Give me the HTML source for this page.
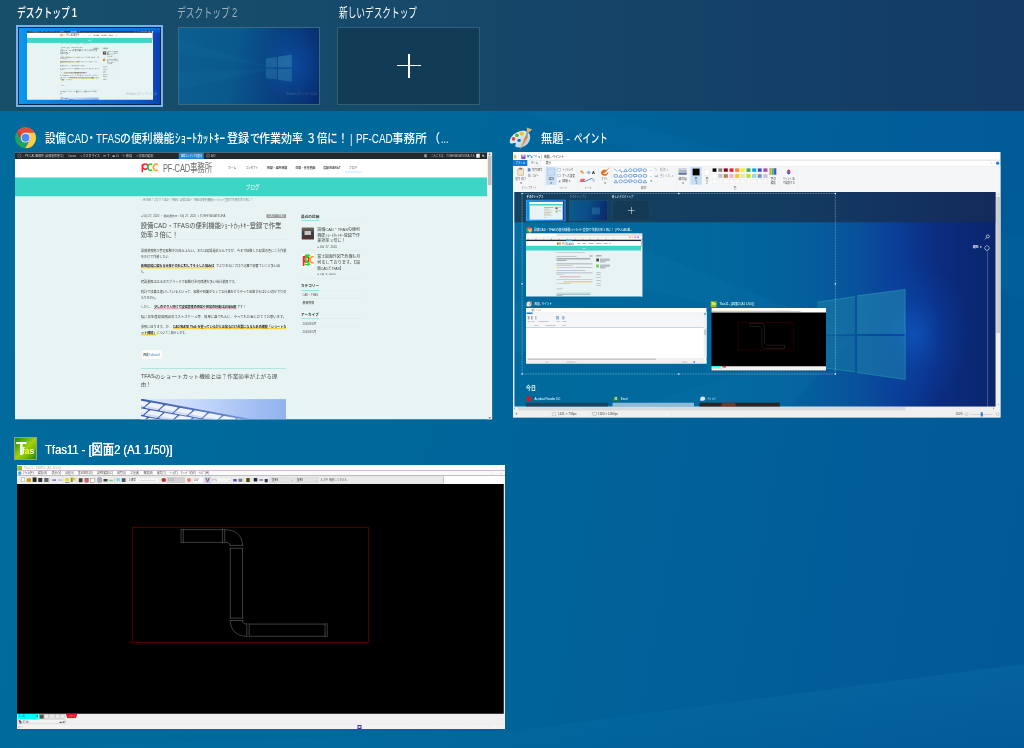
<!DOCTYPE html>
<html lang="ja">
<head>
<meta charset="utf-8">
<title>タスク ビュー</title>
<style>
html,body{margin:0;padding:0}
body{width:1024px;height:748px;overflow:hidden;position:relative;
  font-family:"Liberation Sans","Noto Sans CJK JP",sans-serif;color:#fff;
  background:linear-gradient(100deg,#006b9c 0%,#00689b 40%,#015f99 72%,#015898 100%);}
.a{position:absolute}
.t{position:absolute;white-space:nowrap;transform-origin:0 0;line-height:1}
#strip{left:0;top:0;width:1024px;height:111px;
  background:linear-gradient(90deg,#174f6a 0%,#16496a 40%,#144067 75%,#133a63 100%);}
.dlabel{font-size:13px;top:6.2px}
.wlabel{font-size:13.5px;font-weight:500}
.x4{position:absolute;transform:scale(.25);transform-origin:0 0;overflow:hidden}
.x8{position:absolute;transform:scale(.125);transform-origin:0 0;overflow:hidden}
</style>
</head>
<body>

<!-- wallpaper light rays (blurred backdrop) -->
<svg class="a" style="left:0;top:0" width="1024" height="748" viewBox="0 0 1024 748">
<defs><linearGradient id="ry1" x1="0" y1="0" x2="0" y2="1"><stop offset="0" stop-color="#2aa0d0" stop-opacity=".13"/><stop offset="1" stop-color="#2aa0d0" stop-opacity=".03"/></linearGradient></defs>
<path d="M512 731L1024 664V748H512z" fill="url(#ry1)"/>
<path d="M0 748L512 731V748z" fill="#2aa0d0" opacity=".05"/>
<path d="M590 111L1024 238V300L520 111z" fill="#2aa0d0" opacity=".05"/>
</svg>

<!-- ============ virtual desktop strip ============ -->
<div id="strip" class="a"></div>
<div class="t dlabel" style="left:17.2px;font-weight:500;transform:scaleX(.677)">デスクトップ</div><div class="t dlabel" style="left:72px;top:6.6px;font-size:12px;font-weight:bold;transform:scaleX(.72)">1</div>
<div class="t dlabel" style="left:177.2px;color:#9db1bf;transform:scaleX(.677)">デスクトップ</div><div class="t dlabel" style="left:231.6px;top:6.6px;font-size:12px;color:#9db1bf;transform:scaleX(.78)">2</div>
<div class="t dlabel" style="left:338.5px;transform:scaleX(.667)">新しいデスクトップ</div>

<!-- desktop 1 thumb -->
<div class="a" id="d1" style="left:16px;top:25px;width:147px;height:82px;background:#6fb4ec"></div>
<div class="a" style="left:18px;top:27px;width:143px;height:78px;background:#0b2550"></div>
<div class="a" id="d1in" style="left:19px;top:28px;width:141px;height:76px;background:linear-gradient(90deg,#0a8ee0 0%,#0a78d8 10%,#0a5ac8 85%,#0a3fb0 100%);overflow:hidden"></div>

<!-- desktop 2 thumb -->
<div class="a" id="d2" style="left:178px;top:27px;width:142px;height:78px;box-sizing:border-box;border:1px solid #3c6a84;background:linear-gradient(100deg,#0b5f8f 0%,#0a588c 40%,#093f80 70%,#082a6c 100%);overflow:hidden"></div>

<!-- new desktop -->
<div class="a" id="dn" style="left:337px;top:27px;width:143px;height:78px;box-sizing:border-box;border:1px solid #2f5f79;background:#123c56"></div>
<div class="a" style="left:397px;top:64.5px;width:24px;height:1.6px;background:#fff"></div>
<div class="a" style="left:408.2px;top:53.5px;width:1.6px;height:24px;background:#fff"></div>

<!-- ============ window labels ============ -->
<div class="a wlabel"  id="l1" style="font-size:12.4px;left:0;top:132.55px"><span class="t" style="left:44.5px;transform:scaleX(0.850)">設備</span><span class="t" style="left:67.4px;top:-.93px;font-size:13.5px;transform:scaleX(0.752)">CAD</span><span class="t" style="left:85.8px;transform:scaleX(0.849)">・</span><span class="t" style="left:96px;top:-.93px;font-size:13.5px;transform:scaleX(0.725)">TFAS</span><span class="t" style="left:119.5px;transform:scaleX(0.871)">の</span><span class="t" style="left:131px;transform:scaleX(0.877)">便利機能</span><span class="t" style="left:175.4px;transform:scaleX(0.899)">ｼｮｰﾄｶｯﾄｷｰ</span><span class="t" style="left:227px;transform:scaleX(0.893)">登録</span><span class="t" style="left:249.5px;transform:scaleX(0.806)">で</span><span class="t" style="left:259.3px;transform:scaleX(0.889)">作業効率</span><span class="t" style="left:305.5px;transform:scaleX(0.847)">３</span><span class="t" style="left:317px;transform:scaleX(0.833)">倍に！</span><span class="t" style="left:350px;transform:scaleX(0.774)">|</span><span class="t" style="left:355.6px;top:-.93px;font-size:13.5px;transform:scaleX(0.730)">PF-CAD</span><span class="t" style="left:392.3px;transform:scaleX(0.936)">事務所</span><span class="t" style="left:429px;transform:scaleX(0.887)">（</span><span class="t" style="left:441px;transform:scaleX(0.715)">...</span></div>
<div class="a wlabel"  id="l2" style="font-size:12.4px;left:0;top:132.55px"><span class="t" style="left:540.6px;transform:scaleX(0.904)">無題</span><span class="t" style="left:566px;transform:scaleX(0.968)">-</span><span class="t" style="left:574.2px;transform:scaleX(0.677)">ペイント</span></div>
<div class="t wlabel" id="l3" style="left:45px;top:443px;transform:scaleX(.83);text-shadow:.3px 0 0 #fff">Tfas11 - [図面2 (A1 1/50)]</div>
<!-- ============ window icons ============ -->
<svg class="a" style="left:14px;top:126px" width="24" height="24" viewBox="14 126 24 24">
<defs><linearGradient id="cg" x1="0" y1="0" x2="1" y2="1"><stop offset="0" stop-color="#b8382c"/><stop offset=".5" stop-color="#de4c3e"/></linearGradient></defs>
<g transform="translate(25.55 137.65) scale(10.5 10.65)">
<path d="M-0.842 -0.539 A1 1 0 0 1 0.888 -0.460 L0.000 -0.460 L0 0 L-0.398 0.230 Z" fill="#df4f41"/><path d="M0.888 -0.460 A1 1 0 0 1 -0.046 0.999 L0.398 0.230 L0 0 L0.000 -0.460 Z" fill="#fdcc42"/><path d="M-0.046 0.999 A1 1 0 0 1 -0.842 -0.539 L-0.398 0.230 L0 0 L0.398 0.230 Z" fill="#1da361"/>
<path d="M-0.842 -0.539 L-0.620 -0.620 L-0.200 0.050 L-0.398 0.230 Z" fill="#b93a2e" opacity=".55"/>
<circle r=".465" fill="#eef1f5"/><circle r=".375" fill="#4d8cf5"/>
</g></svg>
<svg class="a" style="left:507px;top:125px" width="28" height="26" viewBox="507 125 28 26">
<defs>
<linearGradient id="pg" x1="0" y1="0" x2="1" y2="1"><stop offset="0" stop-color="#f4f9fd"/><stop offset=".5" stop-color="#cfe3f3"/><stop offset="1" stop-color="#9fc8e8"/></linearGradient>
<linearGradient id="bg" x1="0" y1="1" x2="1" y2="0"><stop offset="0" stop-color="#f3a33a"/><stop offset="1" stop-color="#e07a1c"/></linearGradient>
</defs>
<path d="M509.8 142.2C509.6 137.4 514.2 132.6 520 131.2C525.6 129.9 530 132 530.2 137C530.4 142 526.4 146.4 521.4 147.3C518 147.9 515 147.3 515.2 145.6C515.4 144.4 516.6 143.8 515.6 143.2C514.2 142.5 510 144.6 509.8 142.2Z" fill="url(#pg)"/>
<ellipse cx="519.1" cy="140.4" rx="1.7" ry="1.4" fill="#0e5f98"/>
<circle cx="513.5" cy="138.9" r="1.8" fill="#e0443c"/>
<circle cx="516.9" cy="135.3" r="1.9" fill="#5cb531"/>
<circle cx="521.7" cy="133.6" r="2.1" fill="#f6bd24"/>
<path d="M520.2 148.8L525.2 136.4L527.2 135.6L527.6 137.6L521 148.6Z" fill="url(#bg)"/>
<path d="M525.4 136.2L527 131.6L528.6 132.2L527.5 137Z" fill="#9a9ea6"/>
<path d="M527 131.8L526.7 127.4L532.2 129.5L528.7 132.4Z" fill="#e2b46a"/>
</svg>

<div class="a" style="left:14.1px;top:436.9px;width:22.7px;height:22.9px;box-sizing:border-box;border:1px solid #a39c8c;background:linear-gradient(135deg,#1c8a08 0%,#4ea80a 22%,#a0d208 50%,#7cbc08 70%,#2a8e08 95%)"></div>
<div class="t" style="left:16.1px;top:440.2px;font-size:18px;font-weight:bold;color:#fff;transform:scaleX(.98)">T</div>
<div class="t" style="left:21.6px;top:446.3px;font-size:9.5px;font-weight:bold;color:#e8fbff;transform:scaleX(.9)">f<span style="color:#ffff20">a</span><span style="color:#fff">s</span></div>

<!-- ============ desktop thumbs content ============ -->
<div class="a" style="left:19px;top:28px;width:141px;height:76px;overflow:hidden;background:linear-gradient(90deg,#0a9cf0 0%,#0a8ee8 6%,#0a70d8 50%,#0a54c4 90%,#0a40b0 100%)">
 <div class="a" style="left:0;top:0;width:141px;height:6px;background:linear-gradient(180deg,rgba(10,150,240,.6),rgba(10,150,240,0))"></div>
</div>

<svg class="a" style="left:179px;top:28px" width="140" height="76" viewBox="179 28 140 76">
<defs><radialGradient id="d2g"><stop offset="0" stop-color="#0c58b8" stop-opacity=".55"/><stop offset="1" stop-color="#0c58b8" stop-opacity="0"/></radialGradient></defs>
<ellipse cx="294" cy="66" rx="34" ry="40" fill="url(#d2g)"/>
<path d="M277 68L179 40V54z" fill="#2a8ac0" opacity=".08"/>
<path d="M277 68L179 72V90z" fill="#2a8ac0" opacity=".08"/>
<path d="M266 58.6L277 56.9V67.6H266z" fill="#2c7aa4" opacity=".55"/>
<path d="M278 56.7L291.8 54.6V67.6H278z" fill="#3182aa" opacity=".6"/>
<path d="M266 68.8H277V79.6L266 78z" fill="#2874a0" opacity=".55"/>
<path d="M278 68.8H291.8V81.8L278 79.8z" fill="#2c7aa4" opacity=".6"/>
</svg>

<div class="x4" id="chrome" style="left:15px;top:152px;width:1909.2px;height:1070px;background:transparent">
<div class="a" style="left:0px;top:2.4px;width:1909.2px;height:1067.6px;background:#e8f4f4;"></div>
<div class="a" style="left:0px;top:2.4px;width:1889.2px;height:25.2px;background:#23282d;"></div>
<div class="a" style="left:10px;top:7px;width:15px;height:15px;border-radius:50%;border:2px solid #9ca2a7;box-sizing:border-box"></div>
<span class="t" style="left:30px;top:8.6px;font-size:13.2px;color:#c8ccd0;transform:scaleX(0.855);">⌂ PF-CAD事務所 (設備業界施工)</span>
<span class="t" style="left:212px;top:9px;font-size:12.4px;color:#c8ccd0;transform:scaleX(0.749);">Cocoon</span>
<span class="t" style="left:258px;top:8.6px;font-size:13.2px;color:#c8ccd0;transform:scaleX(0.878);">✎ カスタマイズ</span>
<span class="t" style="left:352px;top:9px;font-size:12.4px;color:#c8ccd0;transform:scaleX(1.278);">⟳ 7</span>
<span class="t" style="left:390px;top:9px;font-size:12.4px;color:#c8ccd0;transform:scaleX(1.346);">■ 0</span>
<span class="t" style="left:428px;top:8.6px;font-size:13.2px;color:#c8ccd0;transform:scaleX(0.925);">＋ 新規</span>
<span class="t" style="left:482px;top:8.6px;font-size:13.2px;color:#c8ccd0;transform:scaleX(0.893);">✎ 投稿の編集</span>
<div class="a" style="left:655.2px;top:2.4px;width:100px;height:25.2px;background:#2686d0;"></div>
<span class="t" style="left:664px;top:9.2px;font-size:12px;color:#fff;transform:scaleX(0.700);">検索エンジンでの表示</span>
<div class="a" style="left:764.8px;top:7px;width:14px;height:14px;border-radius:50%;border:2px solid #b8bcc0;box-sizing:border-box"></div>
<span class="t" style="left:784px;top:9.2px;font-size:12px;color:#c8ccd0;transform:scaleX(0.871);">AIO</span>
<div class="a" style="left:1637.2px;top:9.2px;width:10px;height:12px;background:#9aa0a6;"></div>
<span class="t" style="left:1664px;top:9px;font-size:12.4px;color:#c8ccd0;transform:scaleX(0.817);">こんにちは、TOSHIYA KATSURA さん</span>
<div class="a" style="left:1845.2px;top:7.2px;width:14px;height:16px;background:#f0f0f0;"></div>
<span class="t" style="left:1869.2px;top:9.6px;font-size:11.2px;color:#c8ccd0;transform:scaleX(0.857);filter:grayscale(1) brightness(2);">🔍</span>
<div class="a" style="left:0px;top:27.6px;width:1889.2px;height:74.8px;background:#fff;"></div>
<svg class="a" style="left:0;top:0" width="1909.2" height="1070" viewBox="15 152 477.3 267.5"><g fill="none" stroke-width="1.5"><path d="M142.3 172.3V164.3" stroke="#f23"/><circle cx="145.2" cy="166.6" r="2.6" stroke="#f23"/><path d="M152.2 164.6a2.9 3.1 0 1 0 0 5.2" stroke="#2c3"/><path d="M157.8 164.6a2.9 3.1 0 1 0 0 5.2" stroke="#f92"/></g></svg>
<span class="t" style="left:592px;top:40px;font-size:44.8px;color:#6e6e6e;transform:scaleX(0.672);letter-spacing:-1px;">PF-CAD事務所</span>
<span class="t" style="left:852px;top:58.4px;font-size:12.8px;color:#444;transform:scaleX(0.863);">ホーム</span>
<span class="t" style="left:922px;top:58.4px;font-size:12.8px;color:#444;transform:scaleX(0.781);">コンセプト</span>
<span class="t" style="left:1008px;top:58.4px;font-size:12.8px;color:#444;transform:scaleX(0.902);font-weight:bold;">視察・遠地視察</span>
<span class="t" style="left:1122px;top:58.4px;font-size:12.8px;color:#444;transform:scaleX(0.884);font-weight:bold;">採取・作業動画</span>
<span class="t" style="left:1234px;top:58.4px;font-size:12.8px;color:#444;transform:scaleX(0.776);font-weight:bold;">店舗VR/AR/IoT</span>
<span class="t" style="left:1336px;top:58.4px;font-size:12.8px;color:#444;transform:scaleX(0.865);">ブログ</span>
<div class="a" style="left:1320px;top:78.8px;width:67.2px;height:2.4px;background:#8fd0ee;"></div>
<div class="a" style="left:0px;top:102.4px;width:1889.2px;height:74.8px;background:#3dd6c6;"></div>
<span class="t" style="left:922.4px;top:129.6px;font-size:22.4px;color:#fff;transform:scaleX(0.846);">ブログ</span>
<span class="t" style="left:504px;top:184.6px;font-size:11.6px;color:#7a8585;transform:scaleX(0.896);">⌂ HOME / ブログ / CAD・TFAS / 設備CAD・TFASの便利機能ｼｮｰﾄｶｯﾄｷｰ登録で作業効率３倍に！</span>
<span class="t" style="left:504px;top:251.2px;font-size:11.2px;color:#555;transform:scaleX(0.990);">● 6月 27, 2020 ・ 最終更新日：6月 27, 2020   ✎ TOSHIYA KATSURA</span>
<div class="a" style="left:1006px;top:248.8px;width:78.4px;height:15.2px;background:#9a9a9a;"></div>
<span class="t" style="left:1014px;top:251.2px;font-size:10.4px;color:#e8e8e8;transform:scaleX(1.077);">CAD・TFAS</span>
<span class="t" style="left:503.2px;top:281px;font-size:26.8px;color:#4c4c4c;transform:scaleX(0.950);">設備CAD・TFASの便利機能ｼｮｰﾄｶｯﾄｷｰ登録で作業</span>
<span class="t" style="left:503.2px;top:317px;font-size:26.8px;color:#4c4c4c;transform:scaleX(0.930);">効率３倍に！</span>
<div class="a" style="left:504px;top:350.8px;width:580.4px;height:1.2px;background:#d3e3e3;"></div>
<span class="t" style="left:504px;top:389px;font-size:12.4px;color:#3a3a3a;transform:scaleX(0.998);">設備業界施工管理経験が20年以上ない。または現場過去なんですが、今まで経験した現場の色にこう作業</span>
<span class="t" style="left:504px;top:412.2px;font-size:12.4px;color:#3a3a3a;transform:scaleX(0.986);">をかけて作業したい</span>
<div class="a" style="left:504px;top:460.8px;width:292.8px;height:5.6px;background:#ffd24a;"></div>
<span class="t" style="left:504px;top:451px;font-size:12.4px;color:#222;transform:scaleX(0.987);font-weight:bold;">新規設備に関わる仕事や会社に対してそうした悩みは</span>
<span class="t" style="left:804px;top:451px;font-size:12.4px;color:#3a3a3a;transform:scaleX(0.985);">でよりまれにブログ記事で参数ていこと多い訳</span>
<span class="t" style="left:504px;top:474.6px;font-size:12.4px;color:#3a3a3a;transform:scaleX(0.726);">た。</span>
<span class="t" style="left:504px;top:512.2px;font-size:12.4px;color:#3a3a3a;transform:scaleX(1.008);">建設業界ははるまだブラックで経験付きの保護を多い会計業界です。</span>
<span class="t" style="left:504px;top:553px;font-size:12.4px;color:#3a3a3a;transform:scaleX(1.003);">統計で加算は違いしているといって、経験や知識がなくてお仕事をどうやって迅速すればいいのかでりの</span>
<span class="t" style="left:504px;top:577.8px;font-size:12.4px;color:#3a3a3a;transform:scaleX(0.903);">なりません。</span>
<span class="t" style="left:504px;top:614.2px;font-size:12.4px;color:#3a3a3a;transform:scaleX(0.912);">しかし、</span>
<div class="a" style="left:556px;top:624.8px;width:329.6px;height:4px;background:#f5a3bd;"></div>
<span class="t" style="left:556px;top:614.2px;font-size:12.4px;color:#222;transform:scaleX(0.985);font-weight:bold;">少しの余り人向けで設備管理の現場や現場の時間は記録短縮</span>
<span class="t" style="left:888px;top:614.2px;font-size:12.4px;color:#3a3a3a;transform:scaleX(0.968);">です！</span>
<span class="t" style="left:504px;top:653.8px;font-size:12.4px;color:#3a3a3a;transform:scaleX(1.072);">私に非生産現場施設のコストスケール等、簡単に誰でもんに、やってもお金に立ててお思います。</span>
<span class="t" style="left:504px;top:693px;font-size:12.4px;color:#3a3a3a;transform:scaleX(1.006);">参照に迫ります。が、</span>
<div class="a" style="left:632px;top:702.8px;width:453.2px;height:6px;background:#ffd24a;"></div>
<span class="t" style="left:632px;top:693px;font-size:12.4px;color:#222;transform:scaleX(0.991);font-weight:bold;">CAD!MATE TfaS を使っているひとは知るだけ必要になるための機能「ショートカ</span>
<div class="a" style="left:504px;top:728px;width:62px;height:6px;background:#ffd24a;"></div>
<span class="t" style="left:504px;top:718.2px;font-size:12.4px;color:#222;transform:scaleX(1.001);font-weight:bold;">ット機能」</span>
<span class="t" style="left:568px;top:718.2px;font-size:12.4px;color:#3a3a3a;transform:scaleX(0.903);">についてご紹介します。</span>
<div class="a" style="left:504.8px;top:790.4px;width:85.2px;height:40px;background:#fbfdfd;border:1px solid #d5dcdc;box-sizing:border-box"></div>
<span class="t" style="left:512.8px;top:804.4px;font-size:12px;color:#333;transform:scaleX(0.899);font-weight:bold;">目次</span>
<span class="t" style="left:537.6px;top:804.8px;font-size:11.2px;color:#4a7ac2;transform:scaleX(1.261);">[show]</span>
<div class="a" style="left:504px;top:864px;width:580.4px;height:2.4px;background:#6fdccf;"></div>
<span class="t" style="left:503.2px;top:887.6px;font-size:20px;color:#444;transform:scaleX(1.115);">TFASのショートカット機能とは？作業効率が上がる理</span>
<span class="t" style="left:503.2px;top:919.6px;font-size:20px;color:#444;transform:scaleX(1.070);">由！</span>
<svg class="a" style="left:0;top:0" width="1909.2" height="1070" viewBox="15 152 477.3 267.5"><defs><linearGradient id="kb" x1="0" y1="0" x2="1" y2="0"><stop offset="0" stop-color="#dbe8fd"/><stop offset=".35" stop-color="#c9dbfb"/><stop offset=".7" stop-color="#a9c4f4"/><stop offset="1" stop-color="#92b2ee"/></linearGradient><linearGradient id="kb2" x1="0" y1="0" x2="1" y2="0"><stop offset="0" stop-color="#3d5caa"/><stop offset=".6" stop-color="#5a7cc6"/><stop offset="1" stop-color="#86a4e0"/></linearGradient><clipPath id="kbc"><rect x="140.8" y="399.1" width="145.3" height="20.8"/></clipPath></defs><g clip-path="url(#kbc)"><rect x="140.8" y="399.1" width="145.3" height="20.8" fill="url(#kb)"/><path d="M141 398.6L262 421H141z" fill="url(#kb2)"/><g transform="translate(141 399.6) rotate(10.4) skewX(-38)"><rect x="-4" y="1" width="13.3" height="6.5" rx="1.2" fill="#eef3fb"/><rect x="-4" y="5.6" width="13.3" height="1.3" fill="#c9d6f0"/><rect x="10.8" y="1" width="13.3" height="6.5" rx="1.2" fill="#eef3fb"/><rect x="10.8" y="5.6" width="13.3" height="1.3" fill="#c9d6f0"/><rect x="25.6" y="1" width="13.3" height="6.5" rx="1.2" fill="#eef3fb"/><rect x="25.6" y="5.6" width="13.3" height="1.3" fill="#c9d6f0"/><rect x="40.4" y="1" width="13.3" height="6.5" rx="1.2" fill="#eef3fb"/><rect x="40.4" y="5.6" width="13.3" height="1.3" fill="#c9d6f0"/><rect x="55.2" y="1" width="13.3" height="6.5" rx="1.2" fill="#eef3fb"/><rect x="55.2" y="5.6" width="13.3" height="1.3" fill="#c9d6f0"/><rect x="70" y="1" width="13.3" height="6.5" rx="1.2" fill="#eef3fb"/><rect x="70" y="5.6" width="13.3" height="1.3" fill="#c9d6f0"/><rect x="84.8" y="1" width="13.3" height="6.5" rx="1.2" fill="#eef3fb"/><rect x="84.8" y="5.6" width="13.3" height="1.3" fill="#c9d6f0"/><rect x="99.6" y="1" width="13.3" height="6.5" rx="1.2" fill="#eef3fb"/><rect x="99.6" y="5.6" width="13.3" height="1.3" fill="#c9d6f0"/><rect x="114.4" y="1" width="13.3" height="6.5" rx="1.2" fill="#eef3fb"/><rect x="114.4" y="5.6" width="13.3" height="1.3" fill="#c9d6f0"/><rect x="129.2" y="1" width="13.3" height="6.5" rx="1.2" fill="#eef3fb"/><rect x="129.2" y="5.6" width="13.3" height="1.3" fill="#c9d6f0"/><rect x="-12" y="8.6" width="13.3" height="6.5" rx="1.2" fill="#eef3fb"/><rect x="-12" y="13.2" width="13.3" height="1.3" fill="#c9d6f0"/><rect x="2.8" y="8.6" width="13.3" height="6.5" rx="1.2" fill="#eef3fb"/><rect x="2.8" y="13.2" width="13.3" height="1.3" fill="#c9d6f0"/><rect x="17.6" y="8.6" width="13.3" height="6.5" rx="1.2" fill="#eef3fb"/><rect x="17.6" y="13.2" width="13.3" height="1.3" fill="#c9d6f0"/><rect x="32.4" y="8.6" width="13.3" height="6.5" rx="1.2" fill="#eef3fb"/><rect x="32.4" y="13.2" width="13.3" height="1.3" fill="#c9d6f0"/><rect x="47.2" y="8.6" width="13.3" height="6.5" rx="1.2" fill="#eef3fb"/><rect x="47.2" y="13.2" width="13.3" height="1.3" fill="#c9d6f0"/><rect x="62" y="8.6" width="13.3" height="6.5" rx="1.2" fill="#eef3fb"/><rect x="62" y="13.2" width="13.3" height="1.3" fill="#c9d6f0"/><rect x="76.8" y="8.6" width="13.3" height="6.5" rx="1.2" fill="#eef3fb"/><rect x="76.8" y="13.2" width="13.3" height="1.3" fill="#c9d6f0"/><rect x="91.6" y="8.6" width="13.3" height="6.5" rx="1.2" fill="#eef3fb"/><rect x="91.6" y="13.2" width="13.3" height="1.3" fill="#c9d6f0"/><rect x="106.4" y="8.6" width="13.3" height="6.5" rx="1.2" fill="#eef3fb"/><rect x="106.4" y="13.2" width="13.3" height="1.3" fill="#c9d6f0"/><rect x="121.2" y="8.6" width="13.3" height="6.5" rx="1.2" fill="#eef3fb"/><rect x="121.2" y="13.2" width="13.3" height="1.3" fill="#c9d6f0"/><rect x="-6" y="16.2" width="13.3" height="6.5" rx="1.2" fill="#eef3fb"/><rect x="-6" y="20.8" width="13.3" height="1.3" fill="#c9d6f0"/><rect x="8.8" y="16.2" width="13.3" height="6.5" rx="1.2" fill="#eef3fb"/><rect x="8.8" y="20.8" width="13.3" height="1.3" fill="#c9d6f0"/><rect x="23.6" y="16.2" width="13.3" height="6.5" rx="1.2" fill="#eef3fb"/><rect x="23.6" y="20.8" width="13.3" height="1.3" fill="#c9d6f0"/><rect x="38.4" y="16.2" width="13.3" height="6.5" rx="1.2" fill="#eef3fb"/><rect x="38.4" y="20.8" width="13.3" height="1.3" fill="#c9d6f0"/><rect x="53.2" y="16.2" width="13.3" height="6.5" rx="1.2" fill="#eef3fb"/><rect x="53.2" y="20.8" width="13.3" height="1.3" fill="#c9d6f0"/><rect x="68" y="16.2" width="13.3" height="6.5" rx="1.2" fill="#eef3fb"/><rect x="68" y="20.8" width="13.3" height="1.3" fill="#c9d6f0"/><rect x="82.8" y="16.2" width="13.3" height="6.5" rx="1.2" fill="#eef3fb"/><rect x="82.8" y="20.8" width="13.3" height="1.3" fill="#c9d6f0"/><rect x="97.6" y="16.2" width="13.3" height="6.5" rx="1.2" fill="#eef3fb"/><rect x="97.6" y="20.8" width="13.3" height="1.3" fill="#c9d6f0"/><rect x="112.4" y="16.2" width="13.3" height="6.5" rx="1.2" fill="#eef3fb"/><rect x="112.4" y="20.8" width="13.3" height="1.3" fill="#c9d6f0"/><rect x="127.2" y="16.2" width="13.3" height="6.5" rx="1.2" fill="#eef3fb"/><rect x="127.2" y="20.8" width="13.3" height="1.3" fill="#c9d6f0"/></g></g></svg>
<span class="t" style="left:1144px;top:250.6px;font-size:13.2px;color:#333;transform:scaleX(1.110);font-weight:bold;">最近の投稿</span>
<div class="a" style="left:1144px;top:273.6px;width:240px;height:1.6px;background:#d5e6e6;"></div>
<div class="a" style="left:1144px;top:272.8px;width:73.2px;height:2.8px;background:#7fe0d4;"></div>
<div class="a" style="left:1147.2px;top:302px;width:48.8px;height:48px;background:linear-gradient(180deg,#7a6a5c 0%,#3a3d48 45%,#5a2f2a 100%)"></div>
<div class="a" style="left:1158px;top:316px;width:26px;height:16px;background:#c8c4bc;"></div>
<span class="t" style="left:1208.8px;top:303.2px;font-size:16px;color:#444;transform:scaleX(1.008);">設備CAD・TFASの便利</span>
<span class="t" style="left:1208.8px;top:324.8px;font-size:16px;color:#444;transform:scaleX(1.019);">機能ｼｮｰﾄｶｯﾄｷｰ登録で作</span>
<span class="t" style="left:1208.8px;top:346.4px;font-size:16px;color:#444;transform:scaleX(1.011);">業効率３倍に！</span>
<span class="t" style="left:1208.8px;top:374px;font-size:10.4px;color:#555;transform:scaleX(1.153);">● 6月 27, 2020</span>
<div class="a" style="left:1144px;top:393.2px;width:240px;height:1.2px;background:#d5e6e6;"></div>
<div class="a" style="left:1147.2px;top:410px;width:48.8px;height:50px;background:#fff;"></div>
<svg class="a" style="left:0;top:0" width="1909.2" height="1070" viewBox="15 152 477.3 267.5"><g fill="none" stroke-width="1.7"><path d="M303.6 266V256" stroke="#f23"/><circle cx="306.2" cy="259.2" r="2.6" stroke="#f23"/><path d="M309.5 256.2a2.8 3.4 0 1 0 0 6.4M305 256a3 2 0 0 1 5 0M305 264a3 2 0 0 0 5 0" stroke="#2d2"/><path d="M313.6 257a2.6 3 0 1 0 0 5.4" stroke="#f92"/></g></svg>
<span class="t" style="left:1208.8px;top:412px;font-size:16px;color:#444;transform:scaleX(0.973);">富士図面作図で危機も月</span>
<span class="t" style="left:1208.8px;top:434.4px;font-size:16px;color:#444;transform:scaleX(1.035);">何をしております。【設</span>
<span class="t" style="left:1208.8px;top:456.8px;font-size:16px;color:#444;transform:scaleX(0.854);">備CADとTFAS】</span>
<span class="t" style="left:1208.8px;top:485.2px;font-size:10.4px;color:#555;transform:scaleX(1.164);">● 5月 9, 2020</span>
<div class="a" style="left:1144px;top:504.8px;width:240px;height:1.2px;background:#d5e6e6;"></div>
<span class="t" style="left:1144px;top:530px;font-size:13.6px;color:#333;transform:scaleX(1.059);font-weight:bold;">カテゴリー</span>
<div class="a" style="left:1144px;top:553.6px;width:240px;height:1.6px;background:#d5e6e6;"></div>
<div class="a" style="left:1144px;top:552.8px;width:72px;height:2.8px;background:#7fe0d4;"></div>
<span class="t" style="left:1150px;top:566.2px;font-size:11.6px;color:#555;transform:scaleX(0.953);">CAD・TFAS</span>
<div class="a" style="left:1144px;top:586.4px;width:240px;height:1.2px;background:#dcebeb;"></div>
<span class="t" style="left:1150px;top:599.4px;font-size:11.6px;color:#333;transform:scaleX(0.992);">最新情報</span>
<span class="t" style="left:1144px;top:643.6px;font-size:13.6px;color:#333;transform:scaleX(1.072);font-weight:bold;">アーカイブ</span>
<div class="a" style="left:1144px;top:666.4px;width:240px;height:1.6px;background:#d5e6e6;"></div>
<div class="a" style="left:1144px;top:665.6px;width:72px;height:2.8px;background:#7fe0d4;"></div>
<span class="t" style="left:1150px;top:679.8px;font-size:11.6px;color:#555;transform:scaleX(1.010);">2020年6月</span>
<div class="a" style="left:1144px;top:700.8px;width:240px;height:1.2px;background:#dcebeb;"></div>
<span class="t" style="left:1150px;top:713.4px;font-size:11.6px;color:#555;transform:scaleX(1.010);">2020年5月</span>
<div class="a" style="left:1889.2px;top:2.4px;width:20px;height:1067.6px;background:#f1f1f1;"></div>
<div class="a" style="left:1892px;top:15.2px;width:13.6px;height:116.8px;background:#bdbdbd;"></div>
<svg class="a" style="left:0;top:0" width="1909.2" height="1070" viewBox="15 152 477.3 267.5"><path d="M489.7 153.3l1.2 1.5h-2.4zM489.7 418.8l1.2-1.5h-2.4z" fill="#555"/></svg>
</div>
<div class="a" style="left:26.7px;top:31.05px;width:477.3px;height:255.957px;overflow:hidden;transform:scale(0.264613,0.2686);transform-origin:0 0">
<div class="x4" id="chromemini" style="left:0;top:0;width:1909.2px;height:1070px;background:transparent">
<div class="a" style="left:0px;top:2.4px;width:1909.2px;height:1067.6px;background:#e8f4f4;"></div>
<div class="a" style="left:0px;top:2.4px;width:1889.2px;height:25.2px;background:#23282d;"></div>
<div class="a" style="left:10px;top:7px;width:15px;height:15px;border-radius:50%;border:2px solid #9ca2a7;box-sizing:border-box"></div>
<span class="t" style="left:30px;top:8.6px;font-size:13.2px;color:#c8ccd0;transform:scaleX(0.855);">⌂ PF-CAD事務所 (設備業界施工)</span>
<span class="t" style="left:212px;top:9px;font-size:12.4px;color:#c8ccd0;transform:scaleX(0.749);">Cocoon</span>
<span class="t" style="left:258px;top:8.6px;font-size:13.2px;color:#c8ccd0;transform:scaleX(0.878);">✎ カスタマイズ</span>
<span class="t" style="left:352px;top:9px;font-size:12.4px;color:#c8ccd0;transform:scaleX(1.278);">⟳ 7</span>
<span class="t" style="left:390px;top:9px;font-size:12.4px;color:#c8ccd0;transform:scaleX(1.346);">■ 0</span>
<span class="t" style="left:428px;top:8.6px;font-size:13.2px;color:#c8ccd0;transform:scaleX(0.925);">＋ 新規</span>
<span class="t" style="left:482px;top:8.6px;font-size:13.2px;color:#c8ccd0;transform:scaleX(0.893);">✎ 投稿の編集</span>
<div class="a" style="left:655.2px;top:2.4px;width:100px;height:25.2px;background:#2686d0;"></div>
<span class="t" style="left:664px;top:9.2px;font-size:12px;color:#fff;transform:scaleX(0.700);">検索エンジンでの表示</span>
<div class="a" style="left:764.8px;top:7px;width:14px;height:14px;border-radius:50%;border:2px solid #b8bcc0;box-sizing:border-box"></div>
<span class="t" style="left:784px;top:9.2px;font-size:12px;color:#c8ccd0;transform:scaleX(0.871);">AIO</span>
<div class="a" style="left:1637.2px;top:9.2px;width:10px;height:12px;background:#9aa0a6;"></div>
<span class="t" style="left:1664px;top:9px;font-size:12.4px;color:#c8ccd0;transform:scaleX(0.817);">こんにちは、TOSHIYA KATSURA さん</span>
<div class="a" style="left:1845.2px;top:7.2px;width:14px;height:16px;background:#f0f0f0;"></div>
<span class="t" style="left:1869.2px;top:9.6px;font-size:11.2px;color:#c8ccd0;transform:scaleX(0.857);filter:grayscale(1) brightness(2);">🔍</span>
<div class="a" style="left:0px;top:27.6px;width:1889.2px;height:74.8px;background:#fff;"></div>
<svg class="a" style="left:0;top:0" width="1909.2" height="1070" viewBox="15 152 477.3 267.5"><g fill="none" stroke-width="1.5"><path d="M142.3 172.3V164.3" stroke="#f23"/><circle cx="145.2" cy="166.6" r="2.6" stroke="#f23"/><path d="M152.2 164.6a2.9 3.1 0 1 0 0 5.2" stroke="#2c3"/><path d="M157.8 164.6a2.9 3.1 0 1 0 0 5.2" stroke="#f92"/></g></svg>
<span class="t" style="left:592px;top:40px;font-size:44.8px;color:#6e6e6e;transform:scaleX(0.672);letter-spacing:-1px;">PF-CAD事務所</span>
<span class="t" style="left:852px;top:58.4px;font-size:12.8px;color:#444;transform:scaleX(0.863);">ホーム</span>
<span class="t" style="left:922px;top:58.4px;font-size:12.8px;color:#444;transform:scaleX(0.781);">コンセプト</span>
<span class="t" style="left:1008px;top:58.4px;font-size:12.8px;color:#444;transform:scaleX(0.902);font-weight:bold;">視察・遠地視察</span>
<span class="t" style="left:1122px;top:58.4px;font-size:12.8px;color:#444;transform:scaleX(0.884);font-weight:bold;">採取・作業動画</span>
<span class="t" style="left:1234px;top:58.4px;font-size:12.8px;color:#444;transform:scaleX(0.776);font-weight:bold;">店舗VR/AR/IoT</span>
<span class="t" style="left:1336px;top:58.4px;font-size:12.8px;color:#444;transform:scaleX(0.865);">ブログ</span>
<div class="a" style="left:1320px;top:78.8px;width:67.2px;height:2.4px;background:#8fd0ee;"></div>
<div class="a" style="left:0px;top:102.4px;width:1889.2px;height:74.8px;background:#3dd6c6;"></div>
<span class="t" style="left:922.4px;top:129.6px;font-size:22.4px;color:#fff;transform:scaleX(0.846);">ブログ</span>
<span class="t" style="left:504px;top:184.6px;font-size:11.6px;color:#7a8585;transform:scaleX(0.896);">⌂ HOME / ブログ / CAD・TFAS / 設備CAD・TFASの便利機能ｼｮｰﾄｶｯﾄｷｰ登録で作業効率３倍に！</span>
<span class="t" style="left:504px;top:251.2px;font-size:11.2px;color:#555;transform:scaleX(0.990);">● 6月 27, 2020 ・ 最終更新日：6月 27, 2020   ✎ TOSHIYA KATSURA</span>
<div class="a" style="left:1006px;top:248.8px;width:78.4px;height:15.2px;background:#9a9a9a;"></div>
<span class="t" style="left:1014px;top:251.2px;font-size:10.4px;color:#e8e8e8;transform:scaleX(1.077);">CAD・TFAS</span>
<span class="t" style="left:503.2px;top:281px;font-size:26.8px;color:#4c4c4c;transform:scaleX(0.950);">設備CAD・TFASの便利機能ｼｮｰﾄｶｯﾄｷｰ登録で作業</span>
<span class="t" style="left:503.2px;top:317px;font-size:26.8px;color:#4c4c4c;transform:scaleX(0.930);">効率３倍に！</span>
<div class="a" style="left:504px;top:350.8px;width:580.4px;height:1.2px;background:#d3e3e3;"></div>
<span class="t" style="left:504px;top:389px;font-size:12.4px;color:#3a3a3a;transform:scaleX(0.998);">設備業界施工管理経験が20年以上ない。または現場過去なんですが、今まで経験した現場の色にこう作業</span>
<span class="t" style="left:504px;top:412.2px;font-size:12.4px;color:#3a3a3a;transform:scaleX(0.986);">をかけて作業したい</span>
<div class="a" style="left:504px;top:460.8px;width:292.8px;height:5.6px;background:#ffd24a;"></div>
<span class="t" style="left:504px;top:451px;font-size:12.4px;color:#222;transform:scaleX(0.987);font-weight:bold;">新規設備に関わる仕事や会社に対してそうした悩みは</span>
<span class="t" style="left:804px;top:451px;font-size:12.4px;color:#3a3a3a;transform:scaleX(0.985);">でよりまれにブログ記事で参数ていこと多い訳</span>
<span class="t" style="left:504px;top:474.6px;font-size:12.4px;color:#3a3a3a;transform:scaleX(0.726);">た。</span>
<span class="t" style="left:504px;top:512.2px;font-size:12.4px;color:#3a3a3a;transform:scaleX(1.008);">建設業界ははるまだブラックで経験付きの保護を多い会計業界です。</span>
<span class="t" style="left:504px;top:553px;font-size:12.4px;color:#3a3a3a;transform:scaleX(1.003);">統計で加算は違いしているといって、経験や知識がなくてお仕事をどうやって迅速すればいいのかでりの</span>
<span class="t" style="left:504px;top:577.8px;font-size:12.4px;color:#3a3a3a;transform:scaleX(0.903);">なりません。</span>
<span class="t" style="left:504px;top:614.2px;font-size:12.4px;color:#3a3a3a;transform:scaleX(0.912);">しかし、</span>
<div class="a" style="left:556px;top:624.8px;width:329.6px;height:4px;background:#f5a3bd;"></div>
<span class="t" style="left:556px;top:614.2px;font-size:12.4px;color:#222;transform:scaleX(0.985);font-weight:bold;">少しの余り人向けで設備管理の現場や現場の時間は記録短縮</span>
<span class="t" style="left:888px;top:614.2px;font-size:12.4px;color:#3a3a3a;transform:scaleX(0.968);">です！</span>
<span class="t" style="left:504px;top:653.8px;font-size:12.4px;color:#3a3a3a;transform:scaleX(1.072);">私に非生産現場施設のコストスケール等、簡単に誰でもんに、やってもお金に立ててお思います。</span>
<span class="t" style="left:504px;top:693px;font-size:12.4px;color:#3a3a3a;transform:scaleX(1.006);">参照に迫ります。が、</span>
<div class="a" style="left:632px;top:702.8px;width:453.2px;height:6px;background:#ffd24a;"></div>
<span class="t" style="left:632px;top:693px;font-size:12.4px;color:#222;transform:scaleX(0.991);font-weight:bold;">CAD!MATE TfaS を使っているひとは知るだけ必要になるための機能「ショートカ</span>
<div class="a" style="left:504px;top:728px;width:62px;height:6px;background:#ffd24a;"></div>
<span class="t" style="left:504px;top:718.2px;font-size:12.4px;color:#222;transform:scaleX(1.001);font-weight:bold;">ット機能」</span>
<span class="t" style="left:568px;top:718.2px;font-size:12.4px;color:#3a3a3a;transform:scaleX(0.903);">についてご紹介します。</span>
<div class="a" style="left:504.8px;top:790.4px;width:85.2px;height:40px;background:#fbfdfd;border:1px solid #d5dcdc;box-sizing:border-box"></div>
<span class="t" style="left:512.8px;top:804.4px;font-size:12px;color:#333;transform:scaleX(0.899);font-weight:bold;">目次</span>
<span class="t" style="left:537.6px;top:804.8px;font-size:11.2px;color:#4a7ac2;transform:scaleX(1.261);">[show]</span>
<div class="a" style="left:504px;top:864px;width:580.4px;height:2.4px;background:#6fdccf;"></div>
<span class="t" style="left:503.2px;top:887.6px;font-size:20px;color:#444;transform:scaleX(1.115);">TFASのショートカット機能とは？作業効率が上がる理</span>
<span class="t" style="left:503.2px;top:919.6px;font-size:20px;color:#444;transform:scaleX(1.070);">由！</span>
<svg class="a" style="left:0;top:0" width="1909.2" height="1070" viewBox="15 152 477.3 267.5"><defs><linearGradient id="kb" x1="0" y1="0" x2="1" y2="0"><stop offset="0" stop-color="#dbe8fd"/><stop offset=".35" stop-color="#c9dbfb"/><stop offset=".7" stop-color="#a9c4f4"/><stop offset="1" stop-color="#92b2ee"/></linearGradient><linearGradient id="kb2" x1="0" y1="0" x2="1" y2="0"><stop offset="0" stop-color="#3d5caa"/><stop offset=".6" stop-color="#5a7cc6"/><stop offset="1" stop-color="#86a4e0"/></linearGradient><clipPath id="kbc"><rect x="140.8" y="399.1" width="145.3" height="20.8"/></clipPath></defs><g clip-path="url(#kbc)"><rect x="140.8" y="399.1" width="145.3" height="20.8" fill="url(#kb)"/><path d="M141 398.6L262 421H141z" fill="url(#kb2)"/><g transform="translate(141 399.6) rotate(10.4) skewX(-38)"><rect x="-4" y="1" width="13.3" height="6.5" rx="1.2" fill="#eef3fb"/><rect x="-4" y="5.6" width="13.3" height="1.3" fill="#c9d6f0"/><rect x="10.8" y="1" width="13.3" height="6.5" rx="1.2" fill="#eef3fb"/><rect x="10.8" y="5.6" width="13.3" height="1.3" fill="#c9d6f0"/><rect x="25.6" y="1" width="13.3" height="6.5" rx="1.2" fill="#eef3fb"/><rect x="25.6" y="5.6" width="13.3" height="1.3" fill="#c9d6f0"/><rect x="40.4" y="1" width="13.3" height="6.5" rx="1.2" fill="#eef3fb"/><rect x="40.4" y="5.6" width="13.3" height="1.3" fill="#c9d6f0"/><rect x="55.2" y="1" width="13.3" height="6.5" rx="1.2" fill="#eef3fb"/><rect x="55.2" y="5.6" width="13.3" height="1.3" fill="#c9d6f0"/><rect x="70" y="1" width="13.3" height="6.5" rx="1.2" fill="#eef3fb"/><rect x="70" y="5.6" width="13.3" height="1.3" fill="#c9d6f0"/><rect x="84.8" y="1" width="13.3" height="6.5" rx="1.2" fill="#eef3fb"/><rect x="84.8" y="5.6" width="13.3" height="1.3" fill="#c9d6f0"/><rect x="99.6" y="1" width="13.3" height="6.5" rx="1.2" fill="#eef3fb"/><rect x="99.6" y="5.6" width="13.3" height="1.3" fill="#c9d6f0"/><rect x="114.4" y="1" width="13.3" height="6.5" rx="1.2" fill="#eef3fb"/><rect x="114.4" y="5.6" width="13.3" height="1.3" fill="#c9d6f0"/><rect x="129.2" y="1" width="13.3" height="6.5" rx="1.2" fill="#eef3fb"/><rect x="129.2" y="5.6" width="13.3" height="1.3" fill="#c9d6f0"/><rect x="-12" y="8.6" width="13.3" height="6.5" rx="1.2" fill="#eef3fb"/><rect x="-12" y="13.2" width="13.3" height="1.3" fill="#c9d6f0"/><rect x="2.8" y="8.6" width="13.3" height="6.5" rx="1.2" fill="#eef3fb"/><rect x="2.8" y="13.2" width="13.3" height="1.3" fill="#c9d6f0"/><rect x="17.6" y="8.6" width="13.3" height="6.5" rx="1.2" fill="#eef3fb"/><rect x="17.6" y="13.2" width="13.3" height="1.3" fill="#c9d6f0"/><rect x="32.4" y="8.6" width="13.3" height="6.5" rx="1.2" fill="#eef3fb"/><rect x="32.4" y="13.2" width="13.3" height="1.3" fill="#c9d6f0"/><rect x="47.2" y="8.6" width="13.3" height="6.5" rx="1.2" fill="#eef3fb"/><rect x="47.2" y="13.2" width="13.3" height="1.3" fill="#c9d6f0"/><rect x="62" y="8.6" width="13.3" height="6.5" rx="1.2" fill="#eef3fb"/><rect x="62" y="13.2" width="13.3" height="1.3" fill="#c9d6f0"/><rect x="76.8" y="8.6" width="13.3" height="6.5" rx="1.2" fill="#eef3fb"/><rect x="76.8" y="13.2" width="13.3" height="1.3" fill="#c9d6f0"/><rect x="91.6" y="8.6" width="13.3" height="6.5" rx="1.2" fill="#eef3fb"/><rect x="91.6" y="13.2" width="13.3" height="1.3" fill="#c9d6f0"/><rect x="106.4" y="8.6" width="13.3" height="6.5" rx="1.2" fill="#eef3fb"/><rect x="106.4" y="13.2" width="13.3" height="1.3" fill="#c9d6f0"/><rect x="121.2" y="8.6" width="13.3" height="6.5" rx="1.2" fill="#eef3fb"/><rect x="121.2" y="13.2" width="13.3" height="1.3" fill="#c9d6f0"/><rect x="-6" y="16.2" width="13.3" height="6.5" rx="1.2" fill="#eef3fb"/><rect x="-6" y="20.8" width="13.3" height="1.3" fill="#c9d6f0"/><rect x="8.8" y="16.2" width="13.3" height="6.5" rx="1.2" fill="#eef3fb"/><rect x="8.8" y="20.8" width="13.3" height="1.3" fill="#c9d6f0"/><rect x="23.6" y="16.2" width="13.3" height="6.5" rx="1.2" fill="#eef3fb"/><rect x="23.6" y="20.8" width="13.3" height="1.3" fill="#c9d6f0"/><rect x="38.4" y="16.2" width="13.3" height="6.5" rx="1.2" fill="#eef3fb"/><rect x="38.4" y="20.8" width="13.3" height="1.3" fill="#c9d6f0"/><rect x="53.2" y="16.2" width="13.3" height="6.5" rx="1.2" fill="#eef3fb"/><rect x="53.2" y="20.8" width="13.3" height="1.3" fill="#c9d6f0"/><rect x="68" y="16.2" width="13.3" height="6.5" rx="1.2" fill="#eef3fb"/><rect x="68" y="20.8" width="13.3" height="1.3" fill="#c9d6f0"/><rect x="82.8" y="16.2" width="13.3" height="6.5" rx="1.2" fill="#eef3fb"/><rect x="82.8" y="20.8" width="13.3" height="1.3" fill="#c9d6f0"/><rect x="97.6" y="16.2" width="13.3" height="6.5" rx="1.2" fill="#eef3fb"/><rect x="97.6" y="20.8" width="13.3" height="1.3" fill="#c9d6f0"/><rect x="112.4" y="16.2" width="13.3" height="6.5" rx="1.2" fill="#eef3fb"/><rect x="112.4" y="20.8" width="13.3" height="1.3" fill="#c9d6f0"/><rect x="127.2" y="16.2" width="13.3" height="6.5" rx="1.2" fill="#eef3fb"/><rect x="127.2" y="20.8" width="13.3" height="1.3" fill="#c9d6f0"/></g></g></svg>
<span class="t" style="left:1144px;top:250.6px;font-size:13.2px;color:#333;transform:scaleX(1.110);font-weight:bold;">最近の投稿</span>
<div class="a" style="left:1144px;top:273.6px;width:240px;height:1.6px;background:#d5e6e6;"></div>
<div class="a" style="left:1144px;top:272.8px;width:73.2px;height:2.8px;background:#7fe0d4;"></div>
<div class="a" style="left:1147.2px;top:302px;width:48.8px;height:48px;background:linear-gradient(180deg,#7a6a5c 0%,#3a3d48 45%,#5a2f2a 100%)"></div>
<div class="a" style="left:1158px;top:316px;width:26px;height:16px;background:#c8c4bc;"></div>
<span class="t" style="left:1208.8px;top:303.2px;font-size:16px;color:#444;transform:scaleX(1.008);">設備CAD・TFASの便利</span>
<span class="t" style="left:1208.8px;top:324.8px;font-size:16px;color:#444;transform:scaleX(1.019);">機能ｼｮｰﾄｶｯﾄｷｰ登録で作</span>
<span class="t" style="left:1208.8px;top:346.4px;font-size:16px;color:#444;transform:scaleX(1.011);">業効率３倍に！</span>
<span class="t" style="left:1208.8px;top:374px;font-size:10.4px;color:#555;transform:scaleX(1.153);">● 6月 27, 2020</span>
<div class="a" style="left:1144px;top:393.2px;width:240px;height:1.2px;background:#d5e6e6;"></div>
<div class="a" style="left:1147.2px;top:410px;width:48.8px;height:50px;background:#fff;"></div>
<svg class="a" style="left:0;top:0" width="1909.2" height="1070" viewBox="15 152 477.3 267.5"><g fill="none" stroke-width="1.7"><path d="M303.6 266V256" stroke="#f23"/><circle cx="306.2" cy="259.2" r="2.6" stroke="#f23"/><path d="M309.5 256.2a2.8 3.4 0 1 0 0 6.4M305 256a3 2 0 0 1 5 0M305 264a3 2 0 0 0 5 0" stroke="#2d2"/><path d="M313.6 257a2.6 3 0 1 0 0 5.4" stroke="#f92"/></g></svg>
<span class="t" style="left:1208.8px;top:412px;font-size:16px;color:#444;transform:scaleX(0.973);">富士図面作図で危機も月</span>
<span class="t" style="left:1208.8px;top:434.4px;font-size:16px;color:#444;transform:scaleX(1.035);">何をしております。【設</span>
<span class="t" style="left:1208.8px;top:456.8px;font-size:16px;color:#444;transform:scaleX(0.854);">備CADとTFAS】</span>
<span class="t" style="left:1208.8px;top:485.2px;font-size:10.4px;color:#555;transform:scaleX(1.164);">● 5月 9, 2020</span>
<div class="a" style="left:1144px;top:504.8px;width:240px;height:1.2px;background:#d5e6e6;"></div>
<span class="t" style="left:1144px;top:530px;font-size:13.6px;color:#333;transform:scaleX(1.059);font-weight:bold;">カテゴリー</span>
<div class="a" style="left:1144px;top:553.6px;width:240px;height:1.6px;background:#d5e6e6;"></div>
<div class="a" style="left:1144px;top:552.8px;width:72px;height:2.8px;background:#7fe0d4;"></div>
<span class="t" style="left:1150px;top:566.2px;font-size:11.6px;color:#555;transform:scaleX(0.953);">CAD・TFAS</span>
<div class="a" style="left:1144px;top:586.4px;width:240px;height:1.2px;background:#dcebeb;"></div>
<span class="t" style="left:1150px;top:599.4px;font-size:11.6px;color:#333;transform:scaleX(0.992);">最新情報</span>
<span class="t" style="left:1144px;top:643.6px;font-size:13.6px;color:#333;transform:scaleX(1.072);font-weight:bold;">アーカイブ</span>
<div class="a" style="left:1144px;top:666.4px;width:240px;height:1.6px;background:#d5e6e6;"></div>
<div class="a" style="left:1144px;top:665.6px;width:72px;height:2.8px;background:#7fe0d4;"></div>
<span class="t" style="left:1150px;top:679.8px;font-size:11.6px;color:#555;transform:scaleX(1.010);">2020年6月</span>
<div class="a" style="left:1144px;top:700.8px;width:240px;height:1.2px;background:#dcebeb;"></div>
<span class="t" style="left:1150px;top:713.4px;font-size:11.6px;color:#555;transform:scaleX(1.010);">2020年5月</span>
<div class="a" style="left:1889.2px;top:2.4px;width:20px;height:1067.6px;background:#f1f1f1;"></div>
<div class="a" style="left:1892px;top:15.2px;width:13.6px;height:116.8px;background:#bdbdbd;"></div>
<svg class="a" style="left:0;top:0" width="1909.2" height="1070" viewBox="15 152 477.3 267.5"><path d="M489.7 153.3l1.2 1.5h-2.4zM489.7 418.8l1.2-1.5h-2.4z" fill="#555"/></svg>
</div>
</div>
<div class="x4" id="paint" style="left:512.6px;top:152px;width:1949.6px;height:1061.6px;background:#fff">
<div class="a" style="left:1.6px;top:10.4px;width:12px;height:16.8px;background:#e8c070;border-radius:40%"></div>
<div class="a" style="left:21.6px;top:10.4px;width:1.2px;height:16.8px;background:#bbb;"></div>
<div class="a" style="left:32.8px;top:11.2px;width:16.8px;height:16.4px;background:#8a4fc0;"></div>
<div class="a" style="left:36.8px;top:11.2px;width:8.8px;height:6.4px;background:#e8e0f4;"></div>
<svg class="a" style="left:0;top:0" width="1949.6" height="1061.6" viewBox="512.6 152 487.4 265.4"><g fill="none" stroke-width="1"><path d="M527.6 156.2C529 154.6 531.4 155.2 531.2 158" stroke="#1e8fe0"/><path d="M526.8 154.6V157.2H529.4z" fill="#1e8fe0"/><path d="M535.6 156.2C534.2 154.6 531.9 155.2 532.1 158" stroke="#a8c6e6"/><path d="M536.4 154.6V157.2H533.8z" fill="#a8c6e6"/></g></svg>
<span class="t" style="left:100px;top:14.8px;font-size:10.4px;color:#555;transform:scaleX(1.600);">▾</span>
<div class="a" style="left:114.4px;top:11.2px;width:1.2px;height:16px;background:#999;"></div>
<span class="t" style="left:124px;top:12.4px;font-size:14.4px;color:#222;transform:scaleX(0.799);">無題 - ペイント</span>
<div class="a" style="left:0px;top:30.8px;width:1949.6px;height:3.2px;background:#d6d6d6;"></div>
<div class="a" style="left:-0.4px;top:32px;width:58.4px;height:23.6px;background:#1979ca;"></div>
<span class="t" style="left:9.6px;top:37.6px;font-size:12.8px;color:#fff;transform:scaleX(0.766);">ファイル</span>
<div class="a" style="left:59.2px;top:33.2px;width:52.8px;height:23.6px;background:#f5f6f7;border:1px solid #dadbdc;border-bottom:none;box-sizing:border-box"></div>
<span class="t" style="left:72px;top:38.4px;font-size:12.8px;color:#444;transform:scaleX(0.737);">ホーム</span>
<span class="t" style="left:131.2px;top:38.4px;font-size:12.8px;color:#333;transform:scaleX(0.813);">表示</span>
<span class="t" style="left:1907.2px;top:40px;font-size:12.8px;color:#888;transform:scaleX(1.164);">⌃</span>
<div class="a" style="left:1932px;top:37.6px;width:13px;height:13px;border-radius:50%;background:#1f8be0"></div>
<div class="a" style="left:0px;top:56px;width:1949.6px;height:104px;background:#f5f6f7;border-top:1px solid #dadbdc;box-sizing:border-box"></div>
<div class="a" style="left:17.6px;top:66.4px;width:25.6px;height:28px;background:#efe6d2;border:2px solid #b89a5a;box-sizing:border-box;border-radius:2px"></div>
<div class="a" style="left:24.8px;top:63.2px;width:11.2px;height:6.4px;background:#777;"></div>
<span class="t" style="left:9.6px;top:101.6px;font-size:12.8px;color:#444;transform:scaleX(0.813);">貼り付け</span>
<span class="t" style="left:27.2px;top:119.6px;font-size:10.4px;color:#666;transform:scaleX(1.440);">▾</span>
<div class="a" style="left:59.2px;top:64.8px;width:10.4px;height:12.8px;background:#5b8fd0;"></div>
<span class="t" style="left:76px;top:65.2px;font-size:12.8px;color:#444;transform:scaleX(0.844);">切り取り</span>
<div class="a" style="left:60px;top:87.2px;width:11.2px;height:12.8px;background:#b8c4d4;"></div>
<span class="t" style="left:76.8px;top:87.6px;font-size:12.8px;color:#444;transform:scaleX(0.709);">コピー</span>
<span class="t" style="left:33.6px;top:136.8px;font-size:12px;color:#6a6a6a;transform:scaleX(0.714);">クリップボード</span>
<div class="a" style="left:126.8px;top:61.6px;width:1.2px;height:92.8px;background:#e0e1e2;"></div>
<div class="a" style="left:130.8px;top:60px;width:42.8px;height:72px;background:#c9e0f7;"></div>
<div class="a" style="left:137.6px;top:68px;width:28.8px;height:24.8px;background:transparent;border:1.5px dashed #5a7aa8;box-sizing:border-box"></div>
<span class="t" style="left:141.6px;top:101.6px;font-size:12.8px;color:#444;transform:scaleX(0.875);">選択</span>
<span class="t" style="left:148.8px;top:119.6px;font-size:10.4px;color:#666;transform:scaleX(1.440);">▾</span>
<div class="a" style="left:179.2px;top:65.6px;width:11.2px;height:11.2px;background:transparent;border:1.5px solid #4a7ac0;box-sizing:border-box"></div>
<span class="t" style="left:196.8px;top:65.2px;font-size:12.8px;color:#444;transform:scaleX(0.688);">トリミング</span>
<div class="a" style="left:179.2px;top:88px;width:12px;height:12px;background:transparent;border:1.5px solid #4a7ac0;box-sizing:border-box"></div>
<span class="t" style="left:196.8px;top:87.6px;font-size:12.8px;color:#444;transform:scaleX(0.805);">サイズ変更</span>
<div class="a" style="left:180px;top:109.6px;width:10.4px;height:12px;background:#3f7fd0;clip-path:polygon(0 100%,100% 100%,100% 0)"></div>
<span class="t" style="left:196.8px;top:109.2px;font-size:12.8px;color:#444;transform:scaleX(0.929);">回転 ▾</span>
<span class="t" style="left:185.6px;top:136.8px;font-size:12px;color:#6a6a6a;transform:scaleX(0.620);">イメージ</span>
<div class="a" style="left:258.8px;top:61.6px;width:1.2px;height:92.8px;background:#e0e1e2;"></div>
<span class="t" style="left:268px;top:74px;font-size:18.4px;color:#d9902a;transform:scaleX(1.067);font-weight:bold;">✎</span>
<span class="t" style="left:290.4px;top:74.8px;font-size:16.8px;color:#7aa6d8;transform:scaleX(1.354);">◈</span>
<span class="t" style="left:315.2px;top:75.2px;font-size:16.8px;color:#333;transform:scaleX(1.122);font-weight:bold;">A</span>
<div class="a" style="left:268.8px;top:107.2px;width:16.8px;height:12.8px;background:#e8666e;transform:skewX(-25deg);border-radius:2px"></div>
<span class="t" style="left:293.6px;top:102.8px;font-size:21.6px;color:#3a8ad8;transform:scaleX(3.768);font-weight:bold;">⁄</span>
<span class="t" style="left:313.6px;top:104.8px;font-size:17.6px;color:#8a9ab0;transform:scaleX(1.169);font-weight:transform-origin:0 0;;">⚲</span>
<span class="t" style="left:285.6px;top:136.8px;font-size:12px;color:#6a6a6a;transform:scaleX(0.822);">ツール</span>
<div class="a" style="left:340px;top:61.6px;width:1.2px;height:92.8px;background:#e0e1e2;"></div>
<div class="a" style="left:348px;top:60.8px;width:37.6px;height:38.4px;background:#fdfdfd;border:1px solid #e2e4e6;box-sizing:border-box;border-radius:2px"></div>
<svg class="a" style="left:0;top:0" width="1949.6" height="1061.6" viewBox="512.6 152 487.4 265.4"><path d="M600.6 172.6C601 169.6 604.6 168.6 607.6 170.4C608.6 172.4 607.4 175.4 604.6 175.8C602 176 600.4 174.8 600.6 172.6z" fill="#e8702a"/><path d="M602.6 173.6C604.4 173.4 606.6 171 608.6 168L608.2 171.6C606.8 173.6 604.6 174.8 602.6 173.6z" fill="#fff"/><path d="M606.6 170.2L608.8 167.6" stroke="#c9a46a" stroke-width=".9" fill="none"/></svg>
<span class="t" style="left:352.8px;top:101.6px;font-size:12.8px;color:#444;transform:scaleX(0.713);">ブラシ</span>
<span class="t" style="left:363.2px;top:119.6px;font-size:10.4px;color:#666;transform:scaleX(1.440);">▾</span>
<div class="a" style="left:393.6px;top:61.6px;width:1.2px;height:92.8px;background:#e0e1e2;"></div>
<div class="a" style="left:400.4px;top:62.4px;width:157.2px;height:64px;background:#fbfcfd;border:1px solid #e4e6e8;box-sizing:border-box"></div>
<svg class="a" style="left:0;top:0" width="1949.6" height="1061.6" viewBox="512.6 152 487.4 265.4"><g fill="none" stroke="#3f7cc4" stroke-width=".65"><path d="M613.7 168.7l3.4 3"/><path d="M618.45 171q1-3 1.8 0t1.8 0"/><path d="M623.3 171.6l1.8-2.8 1.8 2.8z"/><ellipse cx="629.95" cy="170.2" rx="1.7" ry="1.4"/><rect x="633.1" y="168.9" width="3.4" height="2.6" rx=".5"/><path d="M637.95 168.8h3.4v2h-1.6l-.8 1v-1h-1z"/><ellipse cx="644.5" cy="170.2" rx="1.7" ry="1.4"/><rect x="613.7" y="174.6" width="3.4" height="2.6" rx=".5"/><path d="M618.45 177.3l1.8-2.8 1.8 2.8z"/><ellipse cx="625.1" cy="175.9" rx="1.7" ry="1.4"/><rect x="628.25" y="174.6" width="3.4" height="2.6" rx=".5"/><path d="M633.1 174.5h3.4v2h-1.6l-.8 1v-1h-1z"/><ellipse cx="639.65" cy="175.9" rx="1.7" ry="1.4"/><rect x="642.8" y="174.6" width="3.4" height="2.6" rx=".5"/><path d="M613.6 182.7l1.8-2.8 1.8 2.8z"/><ellipse cx="620.25" cy="181.3" rx="1.7" ry="1.4"/><rect x="623.4" y="180" width="3.4" height="2.6" rx=".5"/><path d="M628.25 179.9h3.4v2h-1.6l-.8 1v-1h-1z"/><ellipse cx="634.8" cy="181.3" rx="1.7" ry="1.4"/><rect x="637.95" y="180" width="3.4" height="2.6" rx=".5"/><path d="M642.7 182.7l1.8-2.8 1.8 2.8z"/></g></svg>
<span class="t" style="left:546.4px;top:68.4px;font-size:8.8px;color:#999;transform:scaleX(1.600);">▴</span>
<span class="t" style="left:546.4px;top:90.8px;font-size:8.8px;color:#999;transform:scaleX(1.600);">▾</span>
<span class="t" style="left:546.4px;top:110.8px;font-size:10.4px;color:#777;transform:scaleX(1.600);">▾</span>
<span class="t" style="left:564.8px;top:62px;font-size:16.8px;color:#9ab4d8;transform:scaleX(1.143);">✎</span>
<span class="t" style="left:588px;top:64.8px;font-size:12.8px;color:#a0a0a0;transform:scaleX(0.907);">輪郭 ▾</span>
<div class="a" style="left:565.6px;top:88px;width:16px;height:13.6px;background:#9fbbe0;clip-path:polygon(0 100%,30% 30%,60% 60%,80% 0,100% 100%)"></div>
<span class="t" style="left:588px;top:88px;font-size:12.8px;color:#a0a0a0;transform:scaleX(0.729);">塗りつぶし ▾</span>
<span class="t" style="left:511.2px;top:136.8px;font-size:12px;color:#6a6a6a;transform:scaleX(0.966);">図形</span>
<div class="a" style="left:653.6px;top:61.6px;width:1.2px;height:92.8px;background:#e0e1e2;"></div>
<div class="a" style="left:661.6px;top:66.8px;width:33.6px;height:2.4px;background:#61749f;"></div>
<div class="a" style="left:661.6px;top:74px;width:33.6px;height:4.4px;background:#61749f;"></div>
<div class="a" style="left:661.6px;top:82.4px;width:33.6px;height:8.8px;background:#61749f;"></div>
<span class="t" style="left:661.6px;top:101.6px;font-size:12.8px;color:#444;transform:scaleX(0.875);">線の幅</span>
<span class="t" style="left:675.2px;top:119.6px;font-size:10.4px;color:#666;transform:scaleX(1.440);">▾</span>
<div class="a" style="left:704.8px;top:61.6px;width:1.2px;height:92.8px;background:#e0e1e2;"></div>
<div class="a" style="left:710px;top:60px;width:44.8px;height:71.2px;background:#c5ddf5;"></div>
<div class="a" style="left:717.6px;top:66.4px;width:29.6px;height:28px;background:#000;border:1px solid #e8eef6;box-sizing:border-box"></div>
<span class="t" style="left:726.4px;top:101.6px;font-size:12.8px;color:#444;transform:scaleX(0.938);">色</span>
<span class="t" style="left:729.6px;top:116.4px;font-size:12px;color:#444;transform:scaleX(0.837);">1</span>
<div class="a" style="left:763.6px;top:68.4px;width:23.2px;height:24.8px;background:#fff;border:1px solid #c8c8c8;box-sizing:border-box"></div>
<span class="t" style="left:769.6px;top:101.6px;font-size:12.8px;color:#444;transform:scaleX(0.938);">色</span>
<span class="t" style="left:772.8px;top:116.4px;font-size:12px;color:#444;transform:scaleX(0.837);">2</span>
<div class="a" style="left:798px;top:64.8px;width:16.4px;height:15.6px;background:#000;border:1px solid #e6e6e6;box-sizing:border-box"></div>
<div class="a" style="left:798px;top:88px;width:16.4px;height:15.6px;background:#fff;border:1px solid #d8d8d8;box-sizing:border-box"></div>
<div class="a" style="left:798px;top:109.6px;width:16.4px;height:16.4px;background:#fbfbfb;border:1px solid #dcdcdc;box-sizing:border-box"></div>
<div class="a" style="left:820.6px;top:64.8px;width:16.4px;height:15.6px;background:#7f7f7f;border:1px solid #e6e6e6;box-sizing:border-box"></div>
<div class="a" style="left:820.6px;top:88px;width:16.4px;height:15.6px;background:#c3c3c3;border:1px solid #d8d8d8;box-sizing:border-box"></div>
<div class="a" style="left:820.6px;top:109.6px;width:16.4px;height:16.4px;background:#fbfbfb;border:1px solid #dcdcdc;box-sizing:border-box"></div>
<div class="a" style="left:843.2px;top:64.8px;width:16.4px;height:15.6px;background:#880015;border:1px solid #e6e6e6;box-sizing:border-box"></div>
<div class="a" style="left:843.2px;top:88px;width:16.4px;height:15.6px;background:#b97a57;border:1px solid #d8d8d8;box-sizing:border-box"></div>
<div class="a" style="left:843.2px;top:109.6px;width:16.4px;height:16.4px;background:#fbfbfb;border:1px solid #dcdcdc;box-sizing:border-box"></div>
<div class="a" style="left:865.8px;top:64.8px;width:16.4px;height:15.6px;background:#ed1c24;border:1px solid #e6e6e6;box-sizing:border-box"></div>
<div class="a" style="left:865.8px;top:88px;width:16.4px;height:15.6px;background:#ffaec9;border:1px solid #d8d8d8;box-sizing:border-box"></div>
<div class="a" style="left:865.8px;top:109.6px;width:16.4px;height:16.4px;background:#fbfbfb;border:1px solid #dcdcdc;box-sizing:border-box"></div>
<div class="a" style="left:888.4px;top:64.8px;width:16.4px;height:15.6px;background:#ff7f27;border:1px solid #e6e6e6;box-sizing:border-box"></div>
<div class="a" style="left:888.4px;top:88px;width:16.4px;height:15.6px;background:#ffc90e;border:1px solid #d8d8d8;box-sizing:border-box"></div>
<div class="a" style="left:888.4px;top:109.6px;width:16.4px;height:16.4px;background:#fbfbfb;border:1px solid #dcdcdc;box-sizing:border-box"></div>
<div class="a" style="left:911px;top:64.8px;width:16.4px;height:15.6px;background:#fff200;border:1px solid #e6e6e6;box-sizing:border-box"></div>
<div class="a" style="left:911px;top:88px;width:16.4px;height:15.6px;background:#efe4b0;border:1px solid #d8d8d8;box-sizing:border-box"></div>
<div class="a" style="left:911px;top:109.6px;width:16.4px;height:16.4px;background:#fbfbfb;border:1px solid #dcdcdc;box-sizing:border-box"></div>
<div class="a" style="left:933.6px;top:64.8px;width:16.4px;height:15.6px;background:#22b14c;border:1px solid #e6e6e6;box-sizing:border-box"></div>
<div class="a" style="left:933.6px;top:88px;width:16.4px;height:15.6px;background:#b5e61d;border:1px solid #d8d8d8;box-sizing:border-box"></div>
<div class="a" style="left:933.6px;top:109.6px;width:16.4px;height:16.4px;background:#fbfbfb;border:1px solid #dcdcdc;box-sizing:border-box"></div>
<div class="a" style="left:956.2px;top:64.8px;width:16.4px;height:15.6px;background:#00a2e8;border:1px solid #e6e6e6;box-sizing:border-box"></div>
<div class="a" style="left:956.2px;top:88px;width:16.4px;height:15.6px;background:#99d9ea;border:1px solid #d8d8d8;box-sizing:border-box"></div>
<div class="a" style="left:956.2px;top:109.6px;width:16.4px;height:16.4px;background:#fbfbfb;border:1px solid #dcdcdc;box-sizing:border-box"></div>
<div class="a" style="left:978.8px;top:64.8px;width:16.4px;height:15.6px;background:#3f48cc;border:1px solid #e6e6e6;box-sizing:border-box"></div>
<div class="a" style="left:978.8px;top:88px;width:16.4px;height:15.6px;background:#7092be;border:1px solid #d8d8d8;box-sizing:border-box"></div>
<div class="a" style="left:978.8px;top:109.6px;width:16.4px;height:16.4px;background:#fbfbfb;border:1px solid #dcdcdc;box-sizing:border-box"></div>
<div class="a" style="left:1001.4px;top:64.8px;width:16.4px;height:15.6px;background:#a349a4;border:1px solid #e6e6e6;box-sizing:border-box"></div>
<div class="a" style="left:1001.4px;top:88px;width:16.4px;height:15.6px;background:#c8bfe7;border:1px solid #d8d8d8;box-sizing:border-box"></div>
<div class="a" style="left:1001.4px;top:109.6px;width:16.4px;height:16.4px;background:#fbfbfb;border:1px solid #dcdcdc;box-sizing:border-box"></div>
<div class="a" style="left:1026.4px;top:64.4px;width:27.2px;height:27.6px;background:linear-gradient(90deg,#e33,#ee3,#3c3,#3cc,#33e,#c3c);border:1px solid #999;box-sizing:border-box"></div>
<span class="t" style="left:1031.2px;top:101.6px;font-size:12.8px;color:#444;transform:scaleX(0.813);">色の</span>
<span class="t" style="left:1031.2px;top:116px;font-size:12.8px;color:#444;transform:scaleX(0.813);">編集</span>
<span class="t" style="left:882.4px;top:136.8px;font-size:12px;color:#6a6a6a;transform:scaleX(0.999);">色</span>
<div class="a" style="left:1067.2px;top:61.6px;width:1.2px;height:92.8px;background:#e0e1e2;"></div>
<div class="a" style="left:1089.6px;top:64px;width:25.6px;height:31.2px;background:#fff;border:1px solid #ddd;box-sizing:border-box;border-radius:2px"></div>
<div class="a" style="left:1095.2px;top:69.6px;width:15px;height:19px;border-radius:50% 50% 50% 50%/40% 40% 60% 60%;background:conic-gradient(#e33,#e3c,#44e,#3bd,#e33)"></div>
<span class="t" style="left:1079.2px;top:101.6px;font-size:12.8px;color:#444;transform:scaleX(0.686);">ペイント 3D</span>
<span class="t" style="left:1079.2px;top:116px;font-size:12.8px;color:#444;transform:scaleX(0.763);">で編集する</span>
<div class="a" style="left:1137.6px;top:61.6px;width:1.2px;height:92.8px;background:#e0e1e2;"></div>
<div class="a" style="left:4.8px;top:160px;width:1926.4px;height:859.2px;overflow:hidden;background:radial-gradient(ellipse 220px 300px at 1600px 570px,rgba(14,88,196,.75) 0%,rgba(13,74,180,.3) 50%,rgba(13,76,186,0) 100%),linear-gradient(90deg,#006a9c 0%,#01689d 40%,#04609c 60%,#08529b 71%,#0a3f98 79%,#0a2c80 88%,#0a256c 100%)"></div>
<svg class="a" style="left:0;top:0" width="1949.6" height="1061.6" viewBox="512.6 152 487.4 265.4"><g><path d="M856 335L514 196V262z" fill="#2a9ad8" opacity=".07"/><path d="M856 335L514 300V352z" fill="#2a9ad8" opacity=".08"/><path d="M856 335L640 406H790z" fill="#2a9ad8" opacity=".07"/><path d="M817 302.2L854.6 296.6V334.2H817z" fill="#1f86aa" opacity=".48"/><path d="M856.7 295.8L904.8 289.4V334H856.7z" fill="#248eae" opacity=".55"/><path d="M817 336H854.6V371.8L817 367z" fill="#1d7ea8" opacity=".46"/><path d="M856.7 336H904.8V379.5L856.7 372.6z" fill="#2186ac" opacity=".52"/><path d="M817 302.2L854.6 296.6M856.7 295.8L904.8 289.4V379.5L856.7 372.6M854.6 371.8L817 367" fill="none" stroke="#3cc0b4" stroke-width=".5" opacity=".75"/></g></svg>
<div class="a" style="left:4.8px;top:160px;width:1926.4px;height:120.8px;background:linear-gradient(90deg,rgba(22,62,90,.92) 0%,rgba(21,56,90,.9) 50%,rgba(20,44,88,.88) 100%);"></div>
<span class="t" style="left:53.6px;top:170.6px;font-size:13.2px;color:#fff;transform:scaleX(0.728);font-weight:bold;">デスクトップ 1</span>
<span class="t" style="left:225.6px;top:170.6px;font-size:13.2px;color:#7f9db4;transform:scaleX(0.728);">デスクトップ 2</span>
<span class="t" style="left:396px;top:170.6px;font-size:13.2px;color:#fff;transform:scaleX(0.721);">新しいデスクトップ</span>
<div class="a" style="left:52.4px;top:191.2px;width:157.6px;height:86px;background:#3aa0ee;"></div>
<div class="a" style="left:56px;top:194.4px;width:150.4px;height:79.6px;background:linear-gradient(90deg,#0a8ee0,#0a5ac8 70%,#0a3fb0);"></div>
<div class="a" style="left:66.4px;top:197.2px;width:132.8px;height:73.6px;background:#e8f4f4;"></div>
<div class="a" style="left:66.4px;top:197.2px;width:132.8px;height:2.8px;background:#555;"></div>
<div class="a" style="left:66.4px;top:200px;width:132.8px;height:8px;background:#fff;"></div>
<div class="a" style="left:66.4px;top:208px;width:132.8px;height:6.4px;background:#3dd6c6;"></div>
<div class="a" style="left:123.6px;top:221.2px;width:38px;height:2.8px;background:#9aa;"></div>
<div class="a" style="left:123.6px;top:227.2px;width:22px;height:2.8px;background:#bbb;"></div>
<div class="a" style="left:123.6px;top:234.4px;width:34px;height:2.8px;background:#dc8;"></div>
<div class="a" style="left:123.6px;top:240.8px;width:30px;height:2.8px;background:#bbb;"></div>
<div class="a" style="left:123.6px;top:247.2px;width:26px;height:2.8px;background:#caa;"></div>
<div class="a" style="left:123.6px;top:253.6px;width:34px;height:2.8px;background:#dc8;"></div>
<div class="a" style="left:123.6px;top:261.6px;width:10px;height:2.8px;background:#bbb;"></div>
<div class="a" style="left:169.6px;top:220.8px;width:8px;height:8px;background:#655;"></div>
<div class="a" style="left:169.6px;top:233.6px;width:8px;height:8px;background:#8c6;"></div>
<div class="a" style="left:180px;top:221.6px;width:12.8px;height:2.4px;background:#aaa;"></div>
<div class="a" style="left:180px;top:234.4px;width:12.8px;height:2.4px;background:#aaa;"></div>
<div class="a" style="left:224px;top:192.8px;width:154.8px;height:82.8px;background:linear-gradient(100deg,#0c5a8a,#0a4f88 45%,#0a3878 75%,#0a2868);border:1px solid #345f7c;box-sizing:border-box"></div>
<div class="a" style="left:315.6px;top:222px;width:32px;height:28px;background:rgba(60,150,190,.35);"></div>
<div class="a" style="left:397.6px;top:192.8px;width:149.2px;height:82.8px;background:#143a56;border:1px solid #2c5872;box-sizing:border-box"></div>
<div class="a" style="left:459.2px;top:232.8px;width:27.2px;height:2.4px;background:#fff;"></div>
<div class="a" style="left:471.6px;top:220.4px;width:2.4px;height:27.2px;background:#fff;"></div>
<svg class="a" style="left:0;top:0" width="1949.6" height="1061.6" viewBox="512.6 152 487.4 265.4"><g fill="none" stroke="#e8eef4" stroke-width=".45" stroke-dasharray=".8 .8"><path d="M521.7 193.5H835V374H521.7z"/></g><g fill="#fff"><rect x="521.05" y="192.85" width="1.3" height="1.3"/><rect x="677.65" y="192.85" width="1.3" height="1.3"/><rect x="834.35" y="192.85" width="1.3" height="1.3"/><rect x="521.05" y="283.15" width="1.3" height="1.3"/><rect x="834.35" y="283.15" width="1.3" height="1.3"/><rect x="521.05" y="373.35" width="1.3" height="1.3"/><rect x="677.65" y="373.35" width="1.3" height="1.3"/><rect x="834.35" y="373.35" width="1.3" height="1.3"/></g></svg>
<div class="a" style="left:52.4px;top:299.2px;width:23.2px;height:23.2px;border-radius:50%;background:conic-gradient(from -60deg,#e94235 0 120deg,#fbc116 120deg 240deg,#2ba24c 240deg 360deg)"></div>
<div class="a" style="left:58.8px;top:305.6px;width:10.4px;height:10.4px;border-radius:50%;background:#4a8cf5;border:2px solid #fff;box-sizing:border-box"></div>
<span class="t" style="left:84px;top:303.6px;font-size:14.4px;color:#fff;transform:scaleX(0.793);">設備CAD・TFASの便利機能ｼｮｰﾄｶｯﾄｷｰ登録で作業効率３倍に！ | PF-CAD事...</span>
<div class="a" style="left:52.4px;top:325.6px;width:464.8px;height:252px;background:#e8f4f4;"></div>
<div class="a" style="left:52.4px;top:325.6px;width:464.8px;height:11.2px;background:#dee1e6;"></div>
<div class="a" style="left:55.2px;top:327.2px;width:118.4px;height:9.6px;background:#fff;"></div>
<div class="a" style="left:52.4px;top:336.8px;width:464.8px;height:8.8px;background:#fff;"></div>
<div class="a" style="left:69.6px;top:338.8px;width:384px;height:4.8px;background:#f1f3f4;border-radius:3px"></div>
<div class="a" style="left:57.6px;top:346.8px;width:4.8px;height:3.6px;background:#e55;"></div>
<div class="a" style="left:88.8px;top:346.8px;width:4.8px;height:3.6px;background:#5a5;"></div>
<div class="a" style="left:120px;top:346.8px;width:4.8px;height:3.6px;background:#fb3;"></div>
<div class="a" style="left:151.2px;top:346.8px;width:4.8px;height:3.6px;background:#48e;"></div>
<div class="a" style="left:182.4px;top:346.8px;width:4.8px;height:3.6px;background:#e7a;"></div>
<div class="a" style="left:213.6px;top:346.8px;width:4.8px;height:3.6px;background:#5bc;"></div>
<div class="a" style="left:244.8px;top:346.8px;width:4.8px;height:3.6px;background:#a6e;"></div>
<div class="a" style="left:276px;top:346.8px;width:4.8px;height:3.6px;background:#f84;"></div>
<div class="a" style="left:307.2px;top:346.8px;width:4.8px;height:3.6px;background:#6b6;"></div>
<div class="a" style="left:338.4px;top:346.8px;width:4.8px;height:3.6px;background:#e55;"></div>
<div class="a" style="left:369.6px;top:346.8px;width:4.8px;height:3.6px;background:#48e;"></div>
<div class="a" style="left:400.8px;top:346.8px;width:4.8px;height:3.6px;background:#fb3;"></div>
<div class="a" style="left:463.2px;top:338.4px;width:7.2px;height:5.6px;background:#e9a;"></div>
<div class="a" style="left:474.4px;top:338.4px;width:7.2px;height:5.6px;background:#fc4;"></div>
<div class="a" style="left:485.6px;top:338.4px;width:7.2px;height:5.6px;background:#e6e;"></div>
<div class="a" style="left:496.8px;top:338.4px;width:7.2px;height:5.6px;background:#a7f;"></div>
<div class="a" style="left:52.4px;top:351.2px;width:464.8px;height:6px;background:#23282d;"></div>
<div class="a" style="left:212.4px;top:351.2px;width:23.6px;height:6px;background:#2686d0;"></div>
<div class="a" style="left:52.4px;top:357.2px;width:459.6px;height:18px;background:#fff;"></div>
<div class="a" style="left:176px;top:361.6px;width:5.6px;height:9.6px;background:#f44;"></div>
<div class="a" style="left:182.4px;top:362.4px;width:4.8px;height:7.2px;background:#3c3;"></div>
<div class="a" style="left:188px;top:362.4px;width:4px;height:7.2px;background:#f92;"></div>
<span class="t" style="left:196.8px;top:360.8px;font-size:11.2px;color:#666;transform:scaleX(0.628);">PF-CAD事務所</span>
<div class="a" style="left:259.2px;top:366px;width:10.4px;height:2px;background:#777;"></div>
<div class="a" style="left:277.6px;top:366px;width:13.6px;height:2px;background:#777;"></div>
<div class="a" style="left:301.6px;top:366px;width:21.6px;height:2px;background:#777;"></div>
<div class="a" style="left:332px;top:366px;width:21.6px;height:2px;background:#777;"></div>
<div class="a" style="left:361.6px;top:366px;width:17.6px;height:2px;background:#777;"></div>
<div class="a" style="left:384px;top:366px;width:7.2px;height:2px;background:#777;"></div>
<div class="a" style="left:52.4px;top:375.2px;width:459.6px;height:18.8px;background:#3dd6c6;"></div>
<div class="a" style="left:277.6px;top:383.6px;width:12px;height:2.4px;background:#e8fffb;"></div>
<div class="a" style="left:173.6px;top:401.6px;width:112px;height:2.4px;background:#aab;"></div>
<div class="a" style="left:173.6px;top:416.8px;width:80px;height:2.4px;background:#99a;"></div>
<div class="a" style="left:173.6px;top:426.4px;width:136px;height:2.4px;background:#667;"></div>
<div class="a" style="left:173.6px;top:433.6px;width:40px;height:2.4px;background:#667;"></div>
<div class="a" style="left:173.6px;top:446.4px;width:144px;height:2.4px;background:#99a;"></div>
<div class="a" style="left:173.6px;top:452px;width:64px;height:2.4px;background:#aab;"></div>
<div class="a" style="left:173.6px;top:460.8px;width:72px;height:2.4px;background:#d8b040;"></div>
<div class="a" style="left:249.6px;top:460.8px;width:68px;height:2.4px;background:#99a;"></div>
<div class="a" style="left:173.6px;top:472px;width:116px;height:2.4px;background:#99a;"></div>
<div class="a" style="left:173.6px;top:482.4px;width:144px;height:2.4px;background:#aab;"></div>
<div class="a" style="left:173.6px;top:488px;width:28px;height:2.4px;background:#aab;"></div>
<div class="a" style="left:185.6px;top:498.4px;width:84px;height:2.4px;background:#d89;"></div>
<div class="a" style="left:173.6px;top:508.8px;width:144px;height:2.4px;background:#aab;"></div>
<div class="a" style="left:201.6px;top:518.4px;width:116px;height:2.4px;background:#d8b040;"></div>
<div class="a" style="left:173.6px;top:524px;width:56px;height:2.4px;background:#aab;"></div>
<div class="a" style="left:173.6px;top:546.4px;width:24px;height:2.4px;background:#bbb;"></div>
<div class="a" style="left:173.6px;top:567.2px;width:136px;height:2.4px;background:#889;"></div>
<div class="a" style="left:173.6px;top:572.8px;width:24px;height:2.4px;background:#889;"></div>
<div class="a" style="left:173.6px;top:560.8px;width:145.6px;height:1.2px;background:#6fdccf;"></div>
<div class="a" style="left:305.6px;top:413.6px;width:13.6px;height:4px;background:#999;"></div>
<div class="a" style="left:332px;top:414.4px;width:21.6px;height:2.8px;background:#667;"></div>
<div class="a" style="left:332.8px;top:426.4px;width:11.2px;height:11.2px;background:#544;"></div>
<div class="a" style="left:348px;top:427.2px;width:40px;height:2.4px;background:#889;"></div>
<div class="a" style="left:348px;top:432.8px;width:37.6px;height:2.4px;background:#889;"></div>
<div class="a" style="left:348px;top:438.4px;width:21.6px;height:2.4px;background:#889;"></div>
<div class="a" style="left:332.8px;top:450.4px;width:11.2px;height:11.2px;background:#7c5;"></div>
<div class="a" style="left:348px;top:451.2px;width:40px;height:2.4px;background:#889;"></div>
<div class="a" style="left:348px;top:456.8px;width:37.6px;height:2.4px;background:#889;"></div>
<div class="a" style="left:348px;top:462.4px;width:21.6px;height:2.4px;background:#889;"></div>
<div class="a" style="left:332.8px;top:480px;width:18.4px;height:2px;background:#99a;"></div>
<div class="a" style="left:332.8px;top:490.4px;width:18.4px;height:2px;background:#99a;"></div>
<div class="a" style="left:332.8px;top:502.4px;width:18.4px;height:2px;background:#99a;"></div>
<div class="a" style="left:332.8px;top:512px;width:18.4px;height:2px;background:#99a;"></div>
<div class="a" style="left:332.8px;top:524px;width:18.4px;height:2px;background:#99a;"></div>
<div class="a" style="left:332.8px;top:533.6px;width:18.4px;height:2px;background:#99a;"></div>
<div class="a" style="left:512px;top:351.2px;width:5.2px;height:226.4px;background:#f1f1f1;"></div>
<div class="a" style="left:512.8px;top:354.4px;width:3.6px;height:25.6px;background:#bbb;"></div>
<div class="a" style="left:53.6px;top:598.4px;width:20px;height:20px;background:#dfe8f2;border-radius:50% 50% 50% 20%"></div>
<div class="a" style="left:68px;top:596px;width:4px;height:17.6px;background:#d8902a;transform:rotate(25deg)"></div>
<span class="t" style="left:85.6px;top:600.8px;font-size:14.4px;color:#fff;transform:scaleX(0.702);">無題 - ペイント</span>
<div class="a" style="left:52px;top:623.6px;width:721.6px;height:222.8px;background:#fff;"></div>
<div class="a" style="left:52px;top:642px;width:721.6px;height:61.2px;background:#f5f6f7;border-top:1px solid #ddd;box-sizing:border-box"></div>
<div class="a" style="left:53.6px;top:642px;width:24px;height:6px;background:#1979ca;"></div>
<span class="t" style="left:73.6px;top:628.8px;font-size:8.8px;color:#555;transform:scaleX(0.660);">無題 - ペイント</span>
<div class="a" style="left:59.2px;top:656px;width:7.2px;height:14.4px;background:#b9a;"></div>
<div class="a" style="left:72px;top:656px;width:6.4px;height:14.4px;background:#9ab;"></div>
<div class="a" style="left:88px;top:656px;width:6.4px;height:14.4px;background:#bbc;"></div>
<div class="a" style="left:172px;top:656px;width:12px;height:14.4px;background:#9bd;"></div>
<div class="a" style="left:196px;top:656px;width:10.4px;height:14.4px;background:#abd;"></div>
<div class="a" style="left:57.6px;top:676px;width:12px;height:2px;background:#999;"></div>
<div class="a" style="left:73.6px;top:676px;width:12px;height:2px;background:#999;"></div>
<div class="a" style="left:101.6px;top:676px;width:40px;height:2px;background:#999;"></div>
<div class="a" style="left:173.6px;top:676px;width:12px;height:2px;background:#999;"></div>
<div class="a" style="left:197.6px;top:676px;width:16px;height:2px;background:#999;"></div>
<div class="a" style="left:85.6px;top:693.6px;width:16px;height:2px;background:#999;"></div>
<div class="a" style="left:129.6px;top:693.6px;width:40px;height:2px;background:#999;"></div>
<div class="a" style="left:197.6px;top:693.6px;width:12px;height:2px;background:#999;"></div>
<div class="a" style="left:52px;top:702.4px;width:711.2px;height:1.2px;background:#9ab0d0;"></div>
<div class="a" style="left:763.2px;top:642px;width:10.4px;height:182px;background:#f0f0f0;"></div>
<div class="a" style="left:764.8px;top:710px;width:7.2px;height:22px;background:#c4c4c4;"></div>
<div class="a" style="left:764.8px;top:644px;width:7px;height:7px;border-radius:50%;background:#1f8be0"></div>
<div class="a" style="left:52px;top:824px;width:711.2px;height:9.6px;background:#f0f0f0;"></div>
<div class="a" style="left:59.2px;top:826px;width:512.8px;height:5.6px;background:#c8c8c8;"></div>
<div class="a" style="left:52px;top:833.6px;width:721.6px;height:12.8px;background:#f0f0f0;"></div>
<div class="a" style="left:129.6px;top:839.2px;width:12px;height:2px;background:#999;"></div>
<div class="a" style="left:213.6px;top:839.2px;width:36px;height:2px;background:#999;"></div>
<div class="a" style="left:673.6px;top:839.2px;width:24px;height:2px;background:#999;"></div>
<div class="a" style="left:721.6px;top:836.8px;width:6.4px;height:6.4px;background:#2a7ad8;"></div>
<div class="a" style="left:790.8px;top:596.8px;width:23.6px;height:24px;background:#9ac41c;border:1px solid #5f8f1a;box-sizing:border-box"></div>
<span class="t" style="left:794.4px;top:602.8px;font-size:12px;color:#ffd;transform:scaleX(0.745);font-weight:bold;">Tfas</span>
<span class="t" style="left:824.8px;top:601.2px;font-size:14.4px;color:#fff;transform:scaleX(0.846);">Tfas11 - [図面2 (A1 1/50)]</span>
<div class="a" style="left:794px;top:623.6px;width:457.6px;height:250.4px;background:#000;"></div>
<div class="a" style="left:794px;top:623.6px;width:457.6px;height:18.4px;background:#fff;"></div>
<div class="a" style="left:796px;top:632.8px;width:313.6px;height:1.2px;background:#bbb;"></div>
<div class="a" style="left:796px;top:637.6px;width:353.6px;height:2px;background:#999;"></div>
<div class="a" style="left:794px;top:856.8px;width:457.6px;height:17.2px;background:#f2f2f2;"></div>
<div class="a" style="left:794.8px;top:856.8px;width:34.8px;height:5.6px;background:#00ffff;"></div>
<div class="a" style="left:837.6px;top:856.8px;width:14.4px;height:5.2px;background:#e8142c;"></div>
<div class="a" style="left:795.2px;top:864px;width:42.4px;height:4px;background:#ddd;"></div>
<svg class="a" style="left:0;top:0" width="1949.6" height="1061.6" viewBox="512.6 152 487.4 265.4"><g fill="none" stroke-width=".4"><rect x="738" y="322.2" width="55.2" height="27.8" stroke="#5a0000"/><path d="M749.5 323.2H760M749.5 326.4H760M760 323.2q4.2 0 4.2 4.4M761.4 327.6V344.4M764.2 327.6V344.4M761.4 344.4q0 4 4.4 4M765.8 345.2H784M765.8 348.4H784M784 345.2V348.4M749.5 323.2V326.4" stroke="#5c5c5c" stroke-width=".3"/></g></svg>
<span class="t" style="left:52px;top:933.2px;font-size:21.6px;color:#fff;transform:scaleX(0.907);font-weight:bold;">今日</span>
<div class="a" style="left:53.6px;top:977.6px;width:19.2px;height:18.4px;background:#c8201c;border-radius:2px"></div>
<span class="t" style="left:85.6px;top:980.8px;font-size:12.8px;color:#fff;transform:scaleX(0.931);">Acrobat Reader DC</span>
<div class="a" style="left:400px;top:977.6px;width:22.4px;height:18.4px;background:#1f7a44;"></div>
<span class="t" style="left:404.8px;top:980.4px;font-size:13.6px;color:#fff;transform:scaleX(1.410);font-weight:bold;">X</span>
<span class="t" style="left:431.2px;top:980.8px;font-size:12.8px;color:#fff;transform:scaleX(0.882);">Excel</span>
<div class="a" style="left:748.8px;top:978.4px;width:20px;height:16.8px;background:#dfe8f2;border-radius:50% 50% 50% 20%"></div>
<span class="t" style="left:776.8px;top:980.8px;font-size:12.8px;color:#fff;transform:scaleX(0.703);">ペイント</span>
<div class="a" style="left:52px;top:1003.2px;width:327.6px;height:16px;background:#1a4560;"></div>
<div class="a" style="left:397.6px;top:1003.2px;width:326.8px;height:16px;background:#8ebad6;"></div>
<div class="a" style="left:745.6px;top:1003.2px;width:321.6px;height:16px;background:#2a2422;"></div>
<div class="a" style="left:833.6px;top:1003.2px;width:56px;height:16px;background:#6a3a30;"></div>
<svg class="a" style="left:0;top:0" width="1949.6" height="1061.6" viewBox="512.6 152 487.4 265.4"><g fill="none" stroke="#fff" stroke-width=".6"><circle cx="987.4" cy="236.4" r="1.5"/><path d="M986.3 237.5L984.6 239.4"/></g></svg>
<span class="t" style="left:1838.8px;top:375.4px;font-size:11.6px;color:#fff;transform:scaleX(1.073);font-weight:bold;">現在 ▾</span>
<div class="a" style="left:1886.4px;top:373.6px;width:20px;height:20.8px;border-radius:50%;border:2px solid #fff;box-sizing:border-box"></div>
<div class="a" style="left:1895.6px;top:394.4px;width:1.6px;height:624.8px;background:#e8eef6;"></div>
<div class="a" style="left:1931.2px;top:160px;width:18.4px;height:876px;background:#f0f0f0;"></div>
<div class="a" style="left:1932.8px;top:180px;width:15.2px;height:544px;background:#cdcdcd;"></div>
<span class="t" style="left:1935.2px;top:164.8px;font-size:11.2px;color:#666;transform:scaleX(1.156);">⌃</span>
<span class="t" style="left:1935.2px;top:1000.8px;font-size:11.2px;color:#666;transform:scaleX(1.156);">⌄</span>
<div class="a" style="left:0px;top:1019.2px;width:1931.2px;height:16.8px;background:#f0f0f0;"></div>
<div class="a" style="left:17.6px;top:1020px;width:1552px;height:13.6px;background:#dadada;"></div>
<span class="t" style="left:4px;top:1020px;font-size:12.8px;color:#555;transform:scaleX(1.500);">‹</span>
<span class="t" style="left:1919.2px;top:1020px;font-size:12.8px;color:#555;transform:scaleX(1.500);">›</span>
<div class="a" style="left:0px;top:1036px;width:1949.6px;height:25.6px;background:#f0f0f0;"></div>
<span class="t" style="left:7.2px;top:1043.2px;font-size:12px;color:#555;transform:scaleX(1.200);">✛</span>
<div class="a" style="left:157.6px;top:1042.4px;width:13.6px;height:12.8px;background:transparent;border:1px dashed #456;box-sizing:border-box"></div>
<span class="t" style="left:180px;top:1043.2px;font-size:12px;color:#444;transform:scaleX(1.018);">1421 × 733px</span>
<div class="a" style="left:319.2px;top:1042.4px;width:13.6px;height:12.8px;background:transparent;border:1px solid #456;box-sizing:border-box"></div>
<span class="t" style="left:340px;top:1043.2px;font-size:12px;color:#444;transform:scaleX(0.993);">1920 × 1080px</span>
<div class="a" style="left:149.6px;top:1039.2px;width:1.2px;height:20px;background:#d4d4d4;"></div>
<div class="a" style="left:311.2px;top:1039.2px;width:1.2px;height:20px;background:#d4d4d4;"></div>
<div class="a" style="left:633.6px;top:1039.2px;width:1.2px;height:20px;background:#d4d4d4;"></div>
<span class="t" style="left:1769.6px;top:1043.2px;font-size:12px;color:#444;transform:scaleX(0.964);">100%</span>
<div class="a" style="left:1808px;top:1042.4px;width:13px;height:13px;border-radius:50%;border:1.5px solid #777;box-sizing:border-box"></div>
<div class="a" style="left:1932px;top:1042.4px;width:13px;height:13px;border-radius:50%;border:1.5px solid #777;box-sizing:border-box"></div>
<div class="a" style="left:1829.6px;top:1048.4px;width:88px;height:1.6px;background:#b4b4b4;"></div>
<div class="a" style="left:1871.2px;top:1040.8px;width:8px;height:16.8px;background:#1f78d8;"></div>
<div class="a" style="left:0px;top:160px;width:4.8px;height:859.2px;background:#e6ecf4;"></div>
</div>
<div class="x4" id="tfas" style="left:17.2px;top:464.7px;width:1951.6px;height:1056.4px;background:#000">
<div class="a" style="left:0px;top:0px;width:1951.6px;height:22.4px;background:#fff;"></div>
<div class="a" style="left:2.4px;top:4.8px;width:16.8px;height:14.8px;background:#8cc21a;border:1px solid #4f8a10;box-sizing:border-box"></div>
<span class="t" style="left:25.6px;top:6.4px;font-size:13.6px;color:#b4b4b4;transform:scaleX(0.968);">Tfas11 - [図面2 (A1 1/50)]</span>
<span class="t" style="left:1895.2px;top:8.4px;font-size:9.6px;color:#c8c8c8;transform:scaleX(1.735);">–   ☐   ✕</span>
<div class="a" style="left:0px;top:22.4px;width:1951.6px;height:20px;background:#fafafa;border-top:1px solid #d8d8d8;box-sizing:border-box"></div>
<div class="a" style="left:5.2px;top:26.4px;width:12px;height:12.8px;background:#5aa0d8;"></div>
<span class="t" style="left:23.2px;top:26.4px;font-size:12.8px;color:#555;transform:scaleX(1.049);">ﾌｧｲﾙ(F)</span>
<span class="t" style="left:83.2px;top:26.4px;font-size:12.8px;color:#555;transform:scaleX(0.891);">編集(E)</span>
<span class="t" style="left:139.2px;top:26.4px;font-size:12.8px;color:#555;transform:scaleX(0.891);">表示(V)</span>
<span class="t" style="left:193.2px;top:26.4px;font-size:12.8px;color:#555;transform:scaleX(0.797);">設定(S)</span>
<span class="t" style="left:243.2px;top:26.4px;font-size:12.8px;color:#555;transform:scaleX(0.870);">基本図形(D)</span>
<span class="t" style="left:319.2px;top:26.4px;font-size:12.8px;color:#555;transform:scaleX(0.910);">説明/編集(C)</span>
<span class="t" style="left:401.2px;top:26.4px;font-size:12.8px;color:#555;transform:scaleX(0.873);">配管(L)</span>
<span class="t" style="left:453.2px;top:26.4px;font-size:12.8px;color:#555;transform:scaleX(0.844);">工具(A)</span>
<span class="t" style="left:506.4px;top:26.4px;font-size:12.8px;color:#555;transform:scaleX(0.822);">機器(M)</span>
<span class="t" style="left:559.2px;top:26.4px;font-size:12.8px;color:#555;transform:scaleX(0.858);">電気(T)</span>
<span class="t" style="left:611.2px;top:26.4px;font-size:12.8px;color:#555;transform:scaleX(0.900);">ﾂｰﾙ(T)</span>
<span class="t" style="left:655.2px;top:26.4px;font-size:12.8px;color:#555;transform:scaleX(1.017);">ｳｨﾝﾄﾞｳ(W)</span>
<span class="t" style="left:727.2px;top:26.4px;font-size:12.8px;color:#555;transform:scaleX(0.969);">ﾍﾙﾌﾟ(H)</span>
<span class="t" style="left:1897.2px;top:28px;font-size:9.6px;color:#999;transform:scaleX(2.338);">–  ▫  ×</span>
<div class="a" style="left:0px;top:42.4px;width:1951.6px;height:33.2px;background:#ededed;border-top:1px solid #dadada;box-sizing:border-box"></div>
<div class="a" style="left:1705.6px;top:43.6px;width:246px;height:32px;background:#fdfdfd;"></div>
<div class="a" style="left:1207.2px;top:46.4px;width:498.4px;height:27.6px;background:#ebebeb;border:1px solid #d2d2d2;border-right:2px solid #8a8a8a;box-sizing:border-box"></div>
<div class="a" style="left:19.2px;top:50px;width:12px;height:18.4px;background:#fdfdfd;border:1px solid #555;box-sizing:border-box"></div>
<div class="a" style="left:39.2px;top:53.2px;width:16.8px;height:14.4px;background:#c9a21a;"></div>
<div class="a" style="left:63.2px;top:50px;width:15.2px;height:18.4px;background:#222;border:1px solid #777;box-sizing:border-box"></div>
<div class="a" style="left:85.2px;top:51.6px;width:16px;height:16px;background:#333;"></div>
<div class="a" style="left:109.2px;top:51.6px;width:16.8px;height:16px;background:#666;"></div>
<div class="a" style="left:131.2px;top:49.2px;width:1.2px;height:21.6px;background:#bbb;"></div>
<div class="a" style="left:141.2px;top:57.2px;width:14.4px;height:7.2px;background:#7d8fd0;"></div>
<div class="a" style="left:165.2px;top:57.2px;width:14.4px;height:7.2px;background:#c4c4c4;"></div>
<div class="a" style="left:185.6px;top:49.2px;width:1.2px;height:21.6px;background:#bbb;"></div>
<div class="a" style="left:193.2px;top:52.4px;width:14.4px;height:13.6px;background:#e9dd2a;"></div>
<div class="a" style="left:192px;top:67.6px;width:17.6px;height:2px;background:#44a;"></div>
<div class="a" style="left:215.2px;top:50.8px;width:8px;height:17.6px;background:#8a8a4a;"></div>
<div class="a" style="left:223.2px;top:50px;width:9.6px;height:12px;background:#e0d020;"></div>
<div class="a" style="left:237.6px;top:49.2px;width:1.2px;height:21.6px;background:#bbb;"></div>
<div class="a" style="left:247.2px;top:53.2px;width:14.4px;height:16px;background:#4a3a2a;"></div>
<div class="a" style="left:271.2px;top:51.6px;width:15.2px;height:17.6px;background:#c66;border:1px solid #557;box-sizing:border-box"></div>
<div class="a" style="left:293.6px;top:51.6px;width:15.2px;height:17.6px;background:#fbfbf0;border:1.5px solid #333;box-sizing:border-box"></div>
<div class="a" style="left:315.2px;top:49.2px;width:1.2px;height:21.6px;background:#bbb;"></div>
<div class="a" style="left:323.2px;top:50.8px;width:15.2px;height:18.4px;background:#aab;border:1.5px solid #446;box-sizing:border-box"></div>
<div class="a" style="left:345.6px;top:55.6px;width:16px;height:10.4px;background:#444;"></div>
<div class="a" style="left:368.8px;top:58.8px;width:14.4px;height:6.4px;background:#7c8;"></div>
<div class="a" style="left:388.4px;top:49.2px;width:1.2px;height:21.6px;background:#bbb;"></div>
<div class="a" style="left:397.6px;top:53.2px;width:13.6px;height:12px;background:#6ce0e0;"></div>
<div class="a" style="left:419.2px;top:53.2px;width:15.2px;height:14.4px;background:#556;"></div>
<div class="a" style="left:441.2px;top:47.6px;width:126.8px;height:24.8px;background:#f6f6f6;border:1px solid #ccc;box-sizing:border-box"></div>
<span class="t" style="left:447.2px;top:54.4px;font-size:12px;color:#333;transform:scaleX(0.823);">1:通常</span>
<div class="a" style="left:491.2px;top:59.6px;width:64px;height:1.6px;background:#9a9a9a;"></div>
<div class="a" style="left:578.4px;top:51.6px;width:17.6px;height:16.8px;background:#b33;border-radius:50%"></div>
<div class="a" style="left:598.4px;top:47.6px;width:73.6px;height:24.8px;background:#d2d2d2;"></div>
<span class="t" style="left:603.2px;top:54.8px;font-size:11.2px;color:#999;transform:scaleX(1.102);">1/50</span>
<div class="a" style="left:680.8px;top:53.2px;width:14.4px;height:14.4px;background:#e77;border-radius:40%"></div>
<div class="a" style="left:701.6px;top:48.4px;width:43.2px;height:23.2px;background:#fcfcfc;border:1px solid #ccc;box-sizing:border-box"></div>
<span class="t" style="left:707.2px;top:54.8px;font-size:11.2px;color:#445;transform:scaleX(1.098);">0.0°</span>
<div class="a" style="left:749.6px;top:46.8px;width:24px;height:26.4px;background:#b9d9f3;"></div>
<span class="t" style="left:753.6px;top:51.2px;font-size:18.4px;color:#d23;transform:scaleX(1.368);font-weight:bold;">V</span>
<div class="a" style="left:776px;top:48.4px;width:81.6px;height:23.2px;background:#f4f4f4;border:1px solid #c4c4c4;box-sizing:border-box"></div>
<span class="t" style="left:780.8px;top:54.8px;font-size:11.2px;color:#334;transform:scaleX(0.822);">ﾀﾞｸﾄ</span>
<span class="t" style="left:841.6px;top:51.2px;font-size:13.6px;color:#555;transform:scaleX(0.933);">⌄</span>
<div class="a" style="left:864.8px;top:55.6px;width:14.4px;height:10.4px;background:#55c;"></div>
<div class="a" style="left:885.6px;top:54.8px;width:15.2px;height:12px;background:#777;"></div>
<div class="a" style="left:907.2px;top:49.2px;width:1.2px;height:21.6px;background:#bbb;"></div>
<div class="a" style="left:916.8px;top:51.6px;width:14.4px;height:16.8px;background:#554a10;"></div>
<div class="a" style="left:939.2px;top:49.2px;width:1.2px;height:21.6px;background:#bbb;"></div>
<div class="a" style="left:947.2px;top:52.4px;width:13.6px;height:13.6px;background:#224;"></div>
<div class="a" style="left:968.8px;top:56.4px;width:15.2px;height:8px;background:#999;"></div>
<div class="a" style="left:991.2px;top:55.6px;width:12px;height:13.6px;background:#335;"></div>
<div class="a" style="left:1011.2px;top:47.6px;width:96.8px;height:24.8px;background:#e3e3e3;border:1px solid #cfcfcf;box-sizing:border-box"></div>
<span class="t" style="left:1017.6px;top:54px;font-size:12.8px;color:#556;transform:scaleX(1.032);font-weight:bold;">全材</span>
<span class="t" style="left:1095.2px;top:51.6px;font-size:12.8px;color:#666;transform:scaleX(0.945);">⌄</span>
<div class="a" style="left:1112.8px;top:47.6px;width:91.2px;height:24.8px;background:#e3e3e3;border:1px solid #cfcfcf;box-sizing:border-box"></div>
<span class="t" style="left:1119.2px;top:54px;font-size:12.8px;color:#556;transform:scaleX(0.938);font-weight:bold;">全材</span>
<span class="t" style="left:1190.4px;top:51.6px;font-size:12.8px;color:#888;transform:scaleX(0.945);">⌄</span>
<span class="t" style="left:1212.8px;top:54px;font-size:12.8px;color:#666;transform:scaleX(0.830);">入力中 機能してません</span>
<svg class="a" style="left:0;top:0" width="1951.6" height="1056.4" viewBox="17.2 464.7 487.9 264.1"><g fill="none" stroke-width=".48"><rect x="132.4" y="526.9" width="236.3" height="115.3" stroke="#7a0606" stroke-width=".6"/><g stroke="#808080"><path d="M181.3 529.4H224M181.3 542H224M181.3 528.6V542.8M183.5 528.6V542.8M222.6 528.6V542.8M224.9 528.6V542.8"/><path d="M224.9 529.4C236 529.4 242.7 535.5 242.7 545M224.9 542C228.5 542 230.5 543 230.5 545"/><path d="M229.6 545.1H243.6M229.6 548H243.6M230.5 548V617.8M242.7 548V617.8M229.6 617.8H243.6M229.6 620.2H243.6"/><path d="M230.5 620.2C230.5 630 237 636 247 636M242.7 620.2C242.7 622.5 244 623.8 247 623.8"/><path d="M247 622.8V637M249.4 622.8V637M249.4 623.8H326M249.4 636H326M325.2 622.8V637M327.4 622.8V637"/></g></g></svg>
<div class="a" style="left:0px;top:994.8px;width:1951.6px;height:61.6px;background:#f0f0f0;"></div>
<div class="a" style="left:0px;top:1038.8px;width:1951.6px;height:17.6px;background:#f3f3f3;border-top:1px solid #e4e4e4;box-sizing:border-box"></div>
<div class="a" style="left:1.6px;top:996.4px;width:84px;height:19.2px;background:#00ffff;"></div>
<span class="t" style="left:7.2px;top:1000.4px;font-size:11.2px;color:#0a8a8a;transform:scaleX(1.169);">1:通</span>
<span class="t" style="left:75.2px;top:1000.8px;font-size:10.4px;color:#066;transform:scaleX(1.600);">▾</span>
<div class="a" style="left:89.6px;top:998px;width:17.6px;height:16.8px;background:#555;border:1px solid #8a8a8a;box-sizing:border-box"></div>
<div class="a" style="left:110.4px;top:998px;width:17.6px;height:16.8px;background:#e8e8e8;border:1px solid #8a8a8a;box-sizing:border-box"></div>
<div class="a" style="left:131.2px;top:998px;width:17.6px;height:16.8px;background:#e8e8e8;border:1px solid #8a8a8a;box-sizing:border-box"></div>
<div class="a" style="left:152px;top:998px;width:17.6px;height:16.8px;background:#e8e8e8;border:1px solid #8a8a8a;box-sizing:border-box"></div>
<div class="a" style="left:172.8px;top:998px;width:17.6px;height:16.8px;background:#e8e8e8;border:1px solid #8a8a8a;box-sizing:border-box"></div>
<div class="a" style="left:195.2px;top:996.4px;width:46.4px;height:17.2px;background:#e8142c;clip-path:polygon(0 0,100% 0,86% 100%,14% 100%)"></div>
<span class="t" style="left:207.2px;top:998.8px;font-size:9.6px;color:#fbb;transform:scaleX(1.001);">ｼﾝｸﾞﾙ</span>
<div class="a" style="left:2.4px;top:1017.2px;width:191.2px;height:19.2px;background:#f2f2f2;border:1px solid #a4a4a4;box-sizing:border-box"></div>
<div class="a" style="left:7.2px;top:1019.6px;width:6.4px;height:8px;background:#d33;"></div>
<div class="a" style="left:10.4px;top:1025.2px;width:7.2px;height:8.8px;background:#36c;"></div>
<span class="t" style="left:20.8px;top:1021.2px;font-size:11.2px;color:#777;transform:scaleX(1.179);">全体</span>
<span class="t" style="left:167.2px;top:1021.6px;font-size:10.4px;color:#555;transform:scaleX(2.240);">▴▾</span>
<span class="t" style="left:4px;top:1042.4px;font-size:10.4px;color:#777;transform:scaleX(1.039);">ﾚﾃﾞｨ</span>
<div class="a" style="left:1362.4px;top:1040.4px;width:16px;height:15.2px;background:#3a3aa8;"></div>
<div class="a" style="left:1366.4px;top:1044.4px;width:8px;height:8px;background:#dde;"></div>
<div class="a" style="left:1575.2px;top:1040.4px;width:1.2px;height:15.2px;background:#d8d8d8;"></div>
<div class="a" style="left:1685.2px;top:1040.4px;width:1.2px;height:15.2px;background:#d8d8d8;"></div>
<div class="a" style="left:1815.2px;top:1040.4px;width:1.2px;height:15.2px;background:#d8d8d8;"></div>
<div class="a" style="left:1890.4px;top:1040.4px;width:1.2px;height:15.2px;background:#d8d8d8;"></div>
<div class="a" style="left:1946.8px;top:75.6px;width:4.8px;height:920.8px;background:#ececec;"></div>
</div>
<!-- activation watermark in desktop thumbs -->
<div class="t" style="left:125.7px;top:93.4px;font-size:3.2px;color:rgba(140,160,170,.6);transform:scaleX(.8)">Windows のライセンス認証</div>
<div class="t" style="left:285.7px;top:93.4px;font-size:3.2px;color:rgba(120,150,175,.45);transform:scaleX(.8)">Windows のライセンス認証</div>

</body>
</html>
